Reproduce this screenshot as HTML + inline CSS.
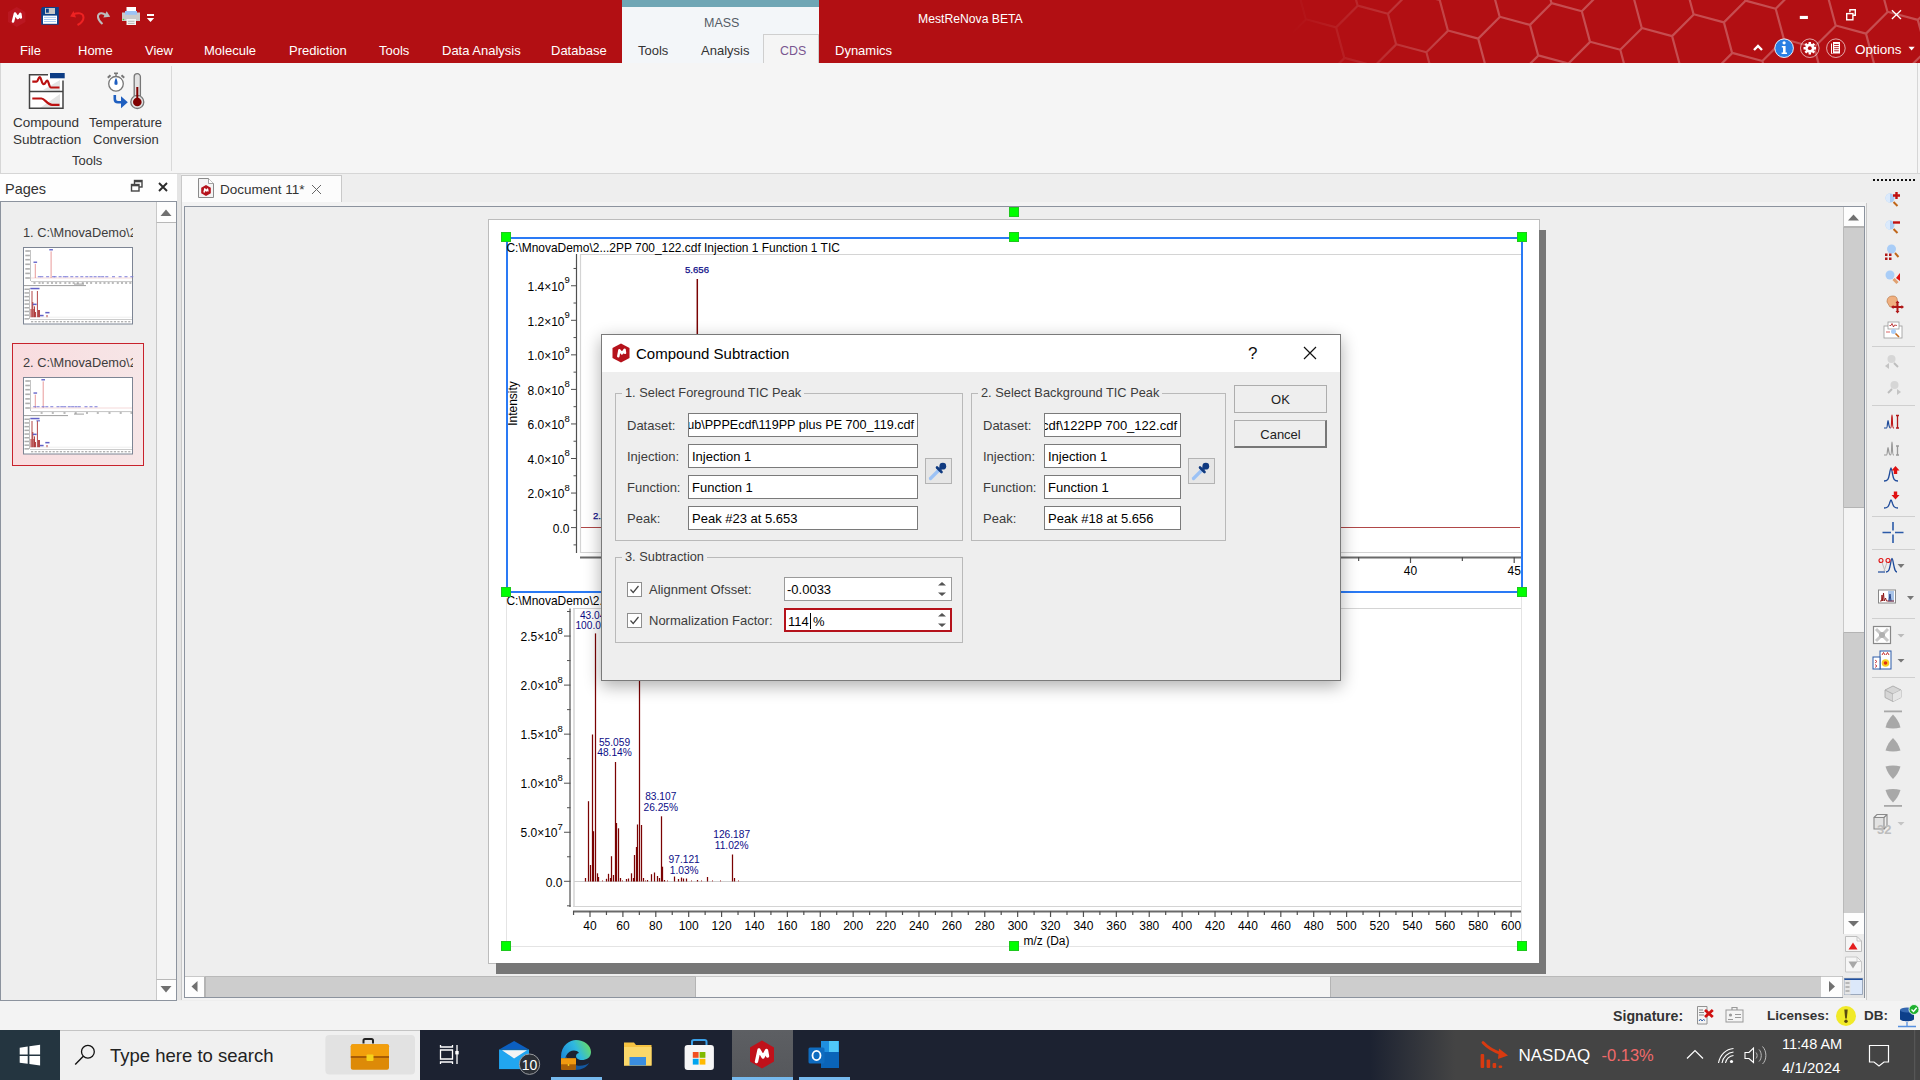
<!DOCTYPE html>
<html><head><meta charset="utf-8">
<style>
*{box-sizing:border-box;margin:0;padding:0}
html,body{width:1920px;height:1080px;overflow:hidden;background:#eeeeee;font-family:"Liberation Sans",sans-serif;position:relative}
.a{position:absolute}
.t{position:absolute;white-space:nowrap;line-height:1}
svg{position:absolute;overflow:visible}

</style></head><body>
<div class="a" style="left:0;top:0;width:1920px;height:63px;background:#b20f13;overflow:hidden">
<svg style="left:0;top:0" width="1920" height="63">
<defs><linearGradient id="hf" x1="1290" x2="1470" y1="40" y2="10" gradientUnits="userSpaceOnUse"><stop offset="0" stop-color="#fff" stop-opacity="0"/><stop offset="1" stop-color="#fff" stop-opacity="1"/></linearGradient>
<mask id="hm"><rect x="0" y="0" width="1920" height="63" fill="url(#hf)"/></mask></defs>
<path d="M1219.2 107.1L1227.3 137.3M1219.2 107.1L1189.0 99.0M1219.2 107.1L1241.3 85.0M1232.5 54.8L1240.6 85.0M1232.5 54.8L1202.3 46.7M1232.5 54.8L1254.6 32.7M1271.0 93.4L1279.1 123.6M1271.0 93.4L1240.8 85.3M1271.0 93.4L1293.1 71.3M1207.3 -36.1L1215.4 -5.9M1207.3 -36.1L1177.1 -44.2M1207.3 -36.1L1229.4 -58.2M1245.8 2.5L1253.9 32.7M1245.8 2.5L1215.6 -5.6M1245.8 2.5L1267.9 -19.6M1284.3 41.1L1292.4 71.3M1284.3 41.1L1254.1 33.0M1284.3 41.1L1306.4 19.0M1322.8 79.7L1330.9 109.9M1322.8 79.7L1292.6 71.6M1322.8 79.7L1344.9 57.6M1361.3 118.3L1369.4 148.5M1361.3 118.3L1331.1 110.2M1361.3 118.3L1383.4 96.2M1259.1 -49.8L1267.2 -19.6M1259.1 -49.8L1228.9 -57.9M1259.1 -49.8L1281.2 -71.9M1297.6 -11.2L1305.7 19.0M1297.6 -11.2L1267.4 -19.3M1297.6 -11.2L1319.7 -33.3M1336.1 27.4L1344.2 57.6M1336.1 27.4L1305.9 19.3M1336.1 27.4L1358.2 5.3M1374.6 66.0L1382.7 96.2M1374.6 66.0L1344.4 57.9M1374.6 66.0L1396.7 43.9M1413.1 104.6L1421.2 134.8M1413.1 104.6L1382.9 96.5M1413.1 104.6L1435.2 82.5M1349.4 -24.9L1357.5 5.3M1349.4 -24.9L1319.2 -33.0M1349.4 -24.9L1371.5 -47.0M1387.9 13.7L1396.0 43.9M1387.9 13.7L1357.7 5.6M1387.9 13.7L1410.0 -8.4M1426.4 52.3L1434.5 82.5M1426.4 52.3L1396.2 44.2M1426.4 52.3L1448.5 30.2M1464.9 90.9L1473.0 121.1M1464.9 90.9L1434.7 82.8M1464.9 90.9L1487.0 68.8M1401.2 -38.6L1409.3 -8.4M1401.2 -38.6L1371.0 -46.7M1401.2 -38.6L1423.3 -60.7M1439.7 0.0L1447.8 30.2M1439.7 0.0L1409.5 -8.1M1439.7 0.0L1461.8 -22.1M1478.2 38.6L1486.3 68.8M1478.2 38.6L1448.0 30.5M1478.2 38.6L1500.3 16.5M1516.7 77.2L1524.8 107.4M1516.7 77.2L1486.5 69.1M1516.7 77.2L1538.8 55.1M1555.2 115.8L1563.3 146.0M1555.2 115.8L1525.0 107.7M1555.2 115.8L1577.3 93.7M1453.0 -52.3L1461.1 -22.1M1453.0 -52.3L1422.8 -60.4M1453.0 -52.3L1475.1 -74.4M1491.5 -13.7L1499.6 16.5M1491.5 -13.7L1461.3 -21.8M1491.5 -13.7L1513.6 -35.8M1530.0 24.9L1538.1 55.1M1530.0 24.9L1499.8 16.8M1530.0 24.9L1552.1 2.8M1568.5 63.5L1576.6 93.7M1568.5 63.5L1538.3 55.4M1568.5 63.5L1590.6 41.4M1607.0 102.1L1615.1 132.3M1607.0 102.1L1576.8 94.0M1607.0 102.1L1629.1 80.0M1543.3 -27.4L1551.4 2.8M1543.3 -27.4L1513.1 -35.5M1543.3 -27.4L1565.4 -49.5M1581.8 11.2L1589.9 41.4M1581.8 11.2L1551.6 3.1M1581.8 11.2L1603.9 -10.9M1620.3 49.8L1628.4 80.0M1620.3 49.8L1590.1 41.7M1620.3 49.8L1642.4 27.7M1658.8 88.4L1666.9 118.6M1658.8 88.4L1628.6 80.3M1658.8 88.4L1680.9 66.3M1595.1 -41.1L1603.2 -10.9M1595.1 -41.1L1564.9 -49.2M1595.1 -41.1L1617.2 -63.2M1633.6 -2.5L1641.7 27.7M1633.6 -2.5L1603.4 -10.6M1633.6 -2.5L1655.7 -24.6M1672.1 36.1L1680.2 66.3M1672.1 36.1L1641.9 28.0M1672.1 36.1L1694.2 14.0M1710.6 74.7L1718.7 104.9M1710.6 74.7L1680.4 66.6M1710.6 74.7L1732.7 52.6M1749.1 113.3L1757.2 143.5M1749.1 113.3L1718.9 105.2M1749.1 113.3L1771.2 91.2M1646.9 -54.8L1655.0 -24.6M1646.9 -54.8L1616.7 -62.9M1646.9 -54.8L1669.0 -76.9M1685.4 -16.2L1693.5 14.0M1685.4 -16.2L1655.2 -24.3M1685.4 -16.2L1707.5 -38.3M1723.9 22.4L1732.0 52.6M1723.9 22.4L1693.7 14.3M1723.9 22.4L1746.0 0.3M1762.4 61.0L1770.5 91.2M1762.4 61.0L1732.2 52.9M1762.4 61.0L1784.5 38.9M1800.9 99.6L1809.0 129.8M1800.9 99.6L1770.7 91.5M1800.9 99.6L1823.0 77.5M1737.2 -29.9L1745.3 0.3M1737.2 -29.9L1707.0 -38.0M1737.2 -29.9L1759.3 -52.0M1775.7 8.7L1783.8 38.9M1775.7 8.7L1745.5 0.6M1775.7 8.7L1797.8 -13.4M1814.2 47.3L1822.3 77.5M1814.2 47.3L1784.0 39.2M1814.2 47.3L1836.3 25.2M1852.7 85.9L1860.8 116.1M1852.7 85.9L1822.5 77.8M1852.7 85.9L1874.8 63.8M1789.0 -43.6L1797.1 -13.4M1789.0 -43.6L1758.8 -51.7M1789.0 -43.6L1811.1 -65.7M1827.5 -5.0L1835.6 25.2M1827.5 -5.0L1797.3 -13.1M1827.5 -5.0L1849.6 -27.1M1866.0 33.6L1874.1 63.8M1866.0 33.6L1835.8 25.5M1866.0 33.6L1888.1 11.5M1904.5 72.2L1912.6 102.4M1904.5 72.2L1874.3 64.1M1904.5 72.2L1926.6 50.1M1943.0 110.8L1951.1 141.0M1943.0 110.8L1912.8 102.7M1943.0 110.8L1965.1 88.7M1840.8 -57.3L1848.9 -27.1M1840.8 -57.3L1810.6 -65.4M1840.8 -57.3L1862.9 -79.4M1879.3 -18.7L1887.4 11.5M1879.3 -18.7L1849.1 -26.8M1879.3 -18.7L1901.4 -40.8M1917.8 19.9L1925.9 50.1M1917.8 19.9L1887.6 11.8M1917.8 19.9L1939.9 -2.2M1956.3 58.5L1964.4 88.7M1956.3 58.5L1926.1 50.4M1956.3 58.5L1978.4 36.4M1931.1 -32.4L1939.2 -2.2M1931.1 -32.4L1900.9 -40.5M1931.1 -32.4L1953.2 -54.5M1969.6 6.2L1977.7 36.4M1969.6 6.2L1939.4 -1.9M1969.6 6.2L1991.7 -15.9" stroke="rgba(255,255,255,0.26)" stroke-width="2.2" fill="none" mask="url(#hm)"/>
</svg>
<!-- MASS context -->
<div class="a" style="left:622px;top:0;width:197px;height:63px;background:#f3f6f9"></div>
<div class="a" style="left:622px;top:0;width:197px;height:7px;background:#6fa6b5"></div>
<div class="a" style="left:763px;top:34px;width:56px;height:30px;background:#f5f5f5;border:1px solid #cfcfcf;border-bottom:none"></div>
<div class="t" style="left:704px;top:17px;font-size:12.5px;color:#555c66">MASS</div>
<div class="t" style="left:918px;top:12.5px;font-size:12.2px;color:#fff">MestReNova BETA</div>
<div class="t" style="left:20px;top:44px;font-size:13px;color:#fff">File</div>
<div class="t" style="left:78px;top:44px;font-size:13px;color:#fff">Home</div>
<div class="t" style="left:145px;top:44px;font-size:13px;color:#fff">View</div>
<div class="t" style="left:204px;top:44px;font-size:13px;color:#fff">Molecule</div>
<div class="t" style="left:289px;top:44px;font-size:13px;color:#fff">Prediction</div>
<div class="t" style="left:379px;top:44px;font-size:13px;color:#fff">Tools</div>
<div class="t" style="left:442px;top:44px;font-size:13px;color:#fff">Data Analysis</div>
<div class="t" style="left:551px;top:44px;font-size:13px;color:#fff">Database</div>
<div class="t" style="left:638px;top:44px;font-size:13px;color:#333">Tools</div>
<div class="t" style="left:701px;top:44px;font-size:13px;color:#333">Analysis</div>
<div class="t" style="left:780px;top:44.5px;font-size:12.4px;color:#7a5590">CDS</div>
<div class="t" style="left:835px;top:44px;font-size:13px;color:#fff">Dynamics</div>
<div class="t" style="left:1855px;top:43px;font-size:13.5px;color:#fff">Options</div>
</div>

<svg style="left:0;top:0" width="200" height="32">
<polygon points="16.7,7 25.4,12 25.4,22 16.7,27 8,22 8,12" fill="#ba1721"/>
<path d="M13 21.5 L15 13.5 L17.8 18 L20.3 13.8 L20.8 17.5" stroke="#fff" stroke-width="2.6" fill="none" stroke-linejoin="round" stroke-linecap="round"/>
<path d="M42.5 7 L58.8 7 L58.8 24.8 L41.2 24.8 L41.2 8.3 Z" fill="#0d3f8a"/>
<rect x="45" y="8" width="10" height="6" fill="#c8c8c8"/><rect x="46" y="8.7" width="2.8" height="4" fill="#0d3f8a"/>
<rect x="43" y="15.6" width="14" height="8.2" fill="#fff"/>
<path d="M44 17.4H56M44 19.5H56M44 21.5H56" stroke="#9cc2f0" stroke-width="0.9"/>
<path d="M73 14.5 C78 12 83.5 13 83.5 17.5 C83.5 21 80.5 23.5 77.5 25" stroke="#ee2222" stroke-width="2" fill="none"/>
<path d="M70.2 16.5 L73.5 11 L76 17.5 Z" fill="#ee2222"/>
<path d="M102.5 24 C97 19.5 96.5 14 101 13.2 C103.5 12.8 105 14.5 106 15.5" stroke="#bdbdbd" stroke-width="2" fill="none"/>
<path d="M110.2 16.7 L106.7 11.25 L103.3 17.5 Z" fill="#bdbdbd"/>
<rect x="126.5" y="7" width="9.5" height="4.5" fill="#fff"/>
<path d="M122 12.5 H140 V21 H122 Z" fill="#cacaca"/>
<rect x="125" y="11" width="12" height="3.8" fill="#9cc3f5"/>
<rect x="126.5" y="19" width="9.5" height="6" fill="#f4f4f4"/>
<path d="M128 21.3H134.5M128 23.4H134.5" stroke="#aaa" stroke-width="0.8"/>
<circle cx="123.5" cy="19.5" r="0.8" fill="#33dd33"/>
<rect x="147" y="14" width="7" height="2" fill="#fff"/>
<path d="M146.8 18 L154.2 18 L150.5 22 Z" fill="#fff"/>
</svg>
<svg style="left:1740px;top:0" width="180" height="63">
<rect x="59.8" y="15.9" width="8.1" height="3.1" fill="#fff"/>
<path d="M109.9 12.3 V9.8 H115.3 V15.2 H113" stroke="#fff" stroke-width="1.4" fill="none"/>
<rect x="106.7" y="13.6" width="6.2" height="6.2" stroke="#fff" stroke-width="1.4" fill="none"/>
<path d="M151.9 10.2 L161 19 M161 10.2 L151.9 19" stroke="#fff" stroke-width="1.3"/>
<path d="M14 50 L18 46 L22 50" stroke="#fff" stroke-width="2.4" fill="none"/>
<circle cx="44.1" cy="48.2" r="9.3" fill="#2b7fe3" stroke="#fff" stroke-width="0.9"/>
<circle cx="44.1" cy="42.8" r="1.6" fill="#fff"/>
<path d="M41.8 46 H45.6 V52.6 H47 V54 H41.6 V52.6 H43 V47.4 H41.8Z" fill="#fff"/>
<circle cx="69.8" cy="48.2" r="9.3" fill="none" stroke="rgba(255,255,255,0.7)" stroke-width="0.9"/>
<g transform="translate(69.8,48.2)"><circle r="4.6" fill="#fff"/><circle r="1.9" fill="#b20f13"/>
<path d="M-1.2 -6.3H1.2V-4H-1.2Z M-1.2 6.3H1.2V4H-1.2Z M-6.3 -1.2V1.2H-4V-1.2Z M6.3 -1.2V1.2H4V-1.2Z" fill="#fff"/>
<g transform="rotate(45)"><path d="M-1.2 -6.3H1.2V-4H-1.2Z M-1.2 6.3H1.2V4H-1.2Z M-6.3 -1.2V1.2H-4V-1.2Z M6.3 -1.2V1.2H4V-1.2Z" fill="#fff"/></g></g>
<circle cx="95.9" cy="48.2" r="9.3" fill="none" stroke="rgba(255,255,255,0.7)" stroke-width="0.9"/>
<path d="M91.5 43.5 V53.5 H92.5" stroke="#fff" stroke-width="1" fill="none"/><rect x="93" y="42" width="7" height="11.5" fill="#fff"/><path d="M94.2 44.5H98.8M94.2 46.6H98.8M94.2 48.7H98.8M94.2 50.8H98.8" stroke="#b20f13" stroke-width="0.9"/>
<path d="M168.5 46.8 L174.7 46.8 L171.6 50.4 Z" fill="#fff"/>
</svg>

<div class="a" style="left:0;top:63px;width:1920px;height:111px;background:#f5f5f5;border-bottom:1px solid #d6d6d6;border-left:1px solid #d6d6d6"></div><div class="a" style="left:1917px;top:63px;width:1px;height:110px;background:#d6d6d6"></div>
<div class="a" style="left:171px;top:66px;width:1px;height:105px;background:#d9d9d9"></div>
<svg style="left:0;top:63px" width="170" height="60">
<g transform="translate(0,-63)">
<path d="M38.5 82 L46 76 L60 84 L60 108 L42 108 Z" fill="#e6e6e6"/>
<rect x="29.5" y="75" width="33" height="33" fill="#fff"/>
<path d="M43 90 L60 80 L60 91 Z M40 108 L60 94 L60 108Z" fill="#e4e4e4"/>
<path d="M48 74.8 H29.5 V108.3 H63 V80.5" stroke="#444" stroke-width="1.5" fill="none"/>
<path d="M29.5 91.5 H63" stroke="#444" stroke-width="1.5"/>
<rect x="50" y="73" width="14.7" height="5.3" fill="#0d3d85"/>
<path d="M32.3 81.6 L36.5 81.6 C38.2 81.6 38.3 77 39.7 77 C41.3 77 41.5 84.2 43.6 84.2 C45.5 84.2 45.8 80.5 47.2 80.5 C48.8 80.5 48.8 87.5 51 87.5 L59.5 87.5" stroke="#bb1111" stroke-width="2.2" fill="none"/>
<path d="M32.3 98.5 L41.5 98.5 C44.5 98.5 47.5 104.8 52 104.8 L59.5 104.8" stroke="#bb1111" stroke-width="2.2" fill="none"/>
<circle cx="116" cy="83.8" r="7.3" fill="#fff" stroke="#777" stroke-width="1.3"/>
<rect x="114" y="72.5" width="4" height="1.6" fill="#777"/><rect x="115.3" y="73.5" width="1.4" height="3" fill="#777"/>
<path d="M107.8 77.8 L110.5 75.2 M124.2 77.8 L121.5 75.2" stroke="#777" stroke-width="2"/>
<path d="M116 77.8 C117.3 80 117.8 83 117.5 84 C117.2 85.2 114.8 85.2 114.5 84 C114.2 83 114.7 80 116 77.8Z" fill="#1f5fc0"/>
<path d="M114.8 95 V99 C114.8 101 116 102.3 118 102.3 H124" stroke="#1f5fc0" stroke-width="2.6" fill="none"/>
<path d="M121 96.3 L127.8 102.3 L121 108.2 Z" fill="#1f5fc0"/>
<path d="M134.2 96 V76.8 A3.1 3.1 0 0 1 140.4 76.8 V96" fill="#e2e2e2" stroke="#777" stroke-width="1.3"/>
<circle cx="137.3" cy="102" r="6.5" fill="#e2e2e2" stroke="#777" stroke-width="1.3"/>
<path d="M134.3 96.5 H140.3 V97.5 H134.3Z" fill="#e2e2e2"/>
<circle cx="137.3" cy="102" r="4.3" fill="#800000"/>
<rect x="136.3" y="87" width="2" height="14" fill="#800000"/>
</g></svg>
<div class="t" style="left:13px;top:116px;font-size:13.5px;color:#333">Compound</div>
<div class="t" style="left:13px;top:133px;font-size:13.5px;color:#333">Subtraction</div>
<div class="t" style="left:89px;top:116px;font-size:13px;color:#333">Temperature</div>
<div class="t" style="left:93px;top:133px;font-size:13px;color:#333">Conversion</div>
<div class="t" style="left:72px;top:154px;font-size:13px;color:#333">Tools</div>

<div class="a" style="left:0;top:174px;width:177px;height:27px;background:#fefefe"></div>
<div class="t" style="left:5px;top:182px;font-size:14.5px;color:#333">Pages</div>
<svg style="left:130px;top:179px" width="14" height="14"><rect x="4.5" y="1.5" width="7.5" height="6.5" fill="none" stroke="#444" stroke-width="1.4"/><rect x="4.5" y="1.5" width="7.5" height="1.8" fill="#444"/><rect x="1.5" y="5.5" width="7.5" height="6.5" fill="#fefefe" stroke="#444" stroke-width="1.4"/><rect x="1.5" y="5.5" width="7.5" height="1.8" fill="#444"/></svg>
<svg style="left:157px;top:181px" width="12" height="12"><path d="M2 2L10 10M10 2L2 10" stroke="#2b2b2b" stroke-width="1.9"/></svg>
<div class="a" style="left:0;top:201px;width:177px;height:800px;background:#eeeeee;border:1px solid #8c939e"></div>
<div class="a" style="left:156px;top:202px;width:20px;height:798px;background:#f4f4f4;border-left:1px solid #c8c8c8"></div>
<div class="a" style="left:156px;top:202px;width:20px;height:21px;background:#fdfdfd;border-left:1px solid #c8c8c8;border-bottom:1px solid #b8b8b8"></div>
<svg style="left:156px;top:202px" width="20" height="21"><path d="M4.5 14 L10 7.4 L15.5 14Z" fill="#707070"/></svg>
<div class="a" style="left:156px;top:979px;width:20px;height:21px;background:#fdfdfd;border-left:1px solid #c8c8c8;border-top:1px solid #b8b8b8"></div>
<svg style="left:156px;top:979px" width="20" height="21"><path d="M4.5 7 L10 13.6 L15.5 7Z" fill="#707070"/></svg>
<div class="a" style="left:177px;top:174px;width:4px;height:826px;background:#e4e4e4"></div>
<div class="t" style="left:23px;top:226.5px;font-size:12.8px;color:#3c3c3c;width:110px;overflow:hidden">1. C:\MnovaDemo\2</div>
<svg style="left:23px;top:247px" width="110" height="78">
<rect x="0.5" y="0.5" width="109" height="76.5" fill="#fff" stroke="#7d8594" stroke-width="1"/>
<rect x="2.3" y="3.2" width="4.6" height="1.6" fill="#9a9a9a" opacity="0.8"/>
<rect x="2.3" y="7.7" width="4.6" height="1.6" fill="#9a9a9a" opacity="0.8"/>
<rect x="2.3" y="11.9" width="4.6" height="1.6" fill="#9a9a9a" opacity="0.8"/>
<rect x="2.3" y="16.5" width="4.6" height="1.6" fill="#9a9a9a" opacity="0.8"/>
<rect x="2.3" y="21.1" width="4.6" height="1.6" fill="#9a9a9a" opacity="0.8"/>
<rect x="2.3" y="25.6" width="4.6" height="1.6" fill="#9a9a9a" opacity="0.8"/>
<rect x="2.3" y="30.2" width="4.6" height="1.6" fill="#9a9a9a" opacity="0.8"/>
<line x1="7.5" y1="3" x2="7.5" y2="34" stroke="#9a9a9a" stroke-width="0.6"/>
<line x1="8" y1="34.6" x2="109" y2="34.6" stroke="#aaa" stroke-width="0.7"/>
<line x1="8" y1="31" x2="109" y2="31" stroke="#eab0b0" stroke-width="0.5"/>
<rect x="10.5" y="35.4" width="2" height="1.2" fill="#777" opacity="0.8"/>
<rect x="15.5" y="35.4" width="2" height="1.2" fill="#777" opacity="0.8"/>
<rect x="18.8" y="35.4" width="2" height="1.2" fill="#777" opacity="0.8"/>
<rect x="23.8" y="35.4" width="2" height="1.2" fill="#777" opacity="0.8"/>
<rect x="28.0" y="35.4" width="2" height="1.2" fill="#777" opacity="0.8"/>
<rect x="32.1" y="35.4" width="2" height="1.2" fill="#777" opacity="0.8"/>
<rect x="36.3" y="35.4" width="2" height="1.2" fill="#777" opacity="0.8"/>
<rect x="41.3" y="35.4" width="2" height="1.2" fill="#777" opacity="0.8"/>
<rect x="45.5" y="35.4" width="2" height="1.2" fill="#777" opacity="0.8"/>
<rect x="49.6" y="35.4" width="2" height="1.2" fill="#777" opacity="0.8"/>
<rect x="53.8" y="35.4" width="2" height="1.2" fill="#777" opacity="0.8"/>
<rect x="58.8" y="35.4" width="2" height="1.2" fill="#777" opacity="0.8"/>
<rect x="63.0" y="35.4" width="2" height="1.2" fill="#777" opacity="0.8"/>
<rect x="67.1" y="35.4" width="2" height="1.2" fill="#777" opacity="0.8"/>
<rect x="72.1" y="35.4" width="2" height="1.2" fill="#777" opacity="0.8"/>
<rect x="76.3" y="35.4" width="2" height="1.2" fill="#777" opacity="0.8"/>
<rect x="80.5" y="35.4" width="2" height="1.2" fill="#777" opacity="0.8"/>
<rect x="84.6" y="35.4" width="2" height="1.2" fill="#777" opacity="0.8"/>
<rect x="88.8" y="35.4" width="2" height="1.2" fill="#777" opacity="0.8"/>
<rect x="93.8" y="35.4" width="2" height="1.2" fill="#777" opacity="0.8"/>
<rect x="98.0" y="35.4" width="2" height="1.2" fill="#777" opacity="0.8"/>
<rect x="102.1" y="35.4" width="2" height="1.2" fill="#777" opacity="0.8"/>
<rect x="106.3" y="35.4" width="2" height="1.2" fill="#777" opacity="0.8"/>
<line x1="12.3" y1="16.9" x2="12.3" y2="31" stroke="#e07070" stroke-width="0.7"/>
<rect x="10.5" y="14.499999999999998" width="3.6" height="1.5" fill="#6060c8" opacity="0.9"/>
<line x1="28.1" y1="4.4" x2="28.1" y2="31" stroke="#e07070" stroke-width="0.7"/>
<rect x="26.3" y="2.0000000000000004" width="3.6" height="1.5" fill="#6060c8" opacity="0.9"/>
<rect x="14.8" y="29" width="3" height="1.3" fill="#7a7ad8" opacity="0.75"/>
<rect x="17.3" y="29" width="3" height="1.3" fill="#7a7ad8" opacity="0.75"/>
<rect x="23.1" y="29" width="3" height="1.3" fill="#7a7ad8" opacity="0.75"/>
<rect x="29.0" y="29" width="3" height="1.3" fill="#7a7ad8" opacity="0.75"/>
<rect x="30.6" y="29" width="3" height="1.3" fill="#7a7ad8" opacity="0.75"/>
<rect x="35.6" y="29" width="3" height="1.3" fill="#7a7ad8" opacity="0.75"/>
<rect x="39.8" y="29" width="3" height="1.3" fill="#7a7ad8" opacity="0.75"/>
<rect x="42.3" y="29" width="3" height="1.3" fill="#7a7ad8" opacity="0.75"/>
<rect x="47.3" y="29" width="3" height="1.3" fill="#7a7ad8" opacity="0.75"/>
<rect x="52.3" y="29" width="3" height="1.3" fill="#7a7ad8" opacity="0.75"/>
<rect x="57.3" y="29" width="3" height="1.3" fill="#7a7ad8" opacity="0.75"/>
<rect x="62.3" y="29" width="3" height="1.3" fill="#7a7ad8" opacity="0.75"/>
<rect x="66.5" y="29" width="3" height="1.3" fill="#7a7ad8" opacity="0.75"/>
<rect x="70.6" y="29" width="3" height="1.3" fill="#7a7ad8" opacity="0.75"/>
<rect x="74.8" y="29" width="3" height="1.3" fill="#7a7ad8" opacity="0.75"/>
<rect x="78.1" y="29" width="3" height="1.3" fill="#7a7ad8" opacity="0.75"/>
<rect x="82.3" y="29" width="3" height="1.3" fill="#7a7ad8" opacity="0.75"/>
<rect x="89.0" y="29" width="3" height="1.3" fill="#7a7ad8" opacity="0.75"/>
<rect x="95.6" y="29" width="3" height="1.3" fill="#7a7ad8" opacity="0.75"/>
<rect x="101.5" y="29" width="3" height="1.3" fill="#7a7ad8" opacity="0.75"/>
<rect x="107.3" y="29" width="3" height="1.3" fill="#7a7ad8" opacity="0.75"/>
<rect x="1" y="38" width="62" height="1.1" fill="#8a8a8a" opacity="0.75"/>
<rect x="51" y="36.6" width="10" height="1" fill="#777" opacity="0.7"/>
<rect x="1.5" y="41.5" width="4.5" height="1.5" fill="#9a9a9a" opacity="0.8"/>
<rect x="1.5" y="45.2" width="4.5" height="1.5" fill="#9a9a9a" opacity="0.8"/>
<rect x="1.5" y="48.9" width="4.5" height="1.5" fill="#9a9a9a" opacity="0.8"/>
<rect x="1.5" y="52.6" width="4.5" height="1.5" fill="#9a9a9a" opacity="0.8"/>
<rect x="1.5" y="56.3" width="4.5" height="1.5" fill="#9a9a9a" opacity="0.8"/>
<rect x="1.5" y="60.0" width="4.5" height="1.5" fill="#9a9a9a" opacity="0.8"/>
<rect x="1.5" y="63.7" width="4.5" height="1.5" fill="#9a9a9a" opacity="0.8"/>
<rect x="1.5" y="67.4" width="4.5" height="1.5" fill="#9a9a9a" opacity="0.8"/>
<rect x="1.5" y="71.1" width="4.5" height="1.5" fill="#9a9a9a" opacity="0.8"/>
<line x1="6.5" y1="41" x2="6.5" y2="72" stroke="#9a9a9a" stroke-width="0.6"/>
<line x1="7" y1="70.2" x2="109" y2="70.2" stroke="#e2e2e2" stroke-width="0.6"/>
<line x1="8" y1="62" x2="8" y2="70.2" stroke="#a01818" stroke-width="0.8"/>
<line x1="9" y1="44" x2="9" y2="70.2" stroke="#a01818" stroke-width="0.8"/>
<line x1="9.8" y1="55" x2="9.8" y2="70.2" stroke="#a01818" stroke-width="0.8"/>
<line x1="10.8" y1="62" x2="10.8" y2="70.2" stroke="#a01818" stroke-width="0.8"/>
<line x1="11.5" y1="59.4" x2="11.5" y2="70.2" stroke="#a01818" stroke-width="0.8"/>
<line x1="12.5" y1="65" x2="12.5" y2="70.2" stroke="#a01818" stroke-width="0.8"/>
<line x1="14.4" y1="44" x2="14.4" y2="70.2" stroke="#a01818" stroke-width="0.8"/>
<line x1="15.5" y1="63" x2="15.5" y2="70.2" stroke="#a01818" stroke-width="0.8"/>
<line x1="16.5" y1="63" x2="16.5" y2="70.2" stroke="#a01818" stroke-width="0.8"/>
<line x1="24" y1="68" x2="24" y2="70.2" stroke="#a01818" stroke-width="0.8"/>
<rect x="7.3" y="40.8" width="9.2" height="1.5" fill="#5050c0" opacity="0.9"/>
<rect x="9.8" y="56.6" width="3.8" height="1.5" fill="#5050c0" opacity="0.9"/>
<rect x="16.9" y="67.8" width="3.7" height="1.5" fill="#5050c0" opacity="0.9"/>
<rect x="22.3" y="64.9" width="4.2" height="1.5" fill="#5050c0" opacity="0.9"/>
<line x1="7" y1="72.5" x2="109" y2="72.5" stroke="#aaa" stroke-width="0.6"/>
<rect x="8.0" y="74.2" width="2.2" height="1.1" fill="#888" opacity="0.8"/>
<rect x="11.6" y="74.2" width="2.2" height="1.1" fill="#888" opacity="0.8"/>
<rect x="15.2" y="74.2" width="2.2" height="1.1" fill="#888" opacity="0.8"/>
<rect x="18.8" y="74.2" width="2.2" height="1.1" fill="#888" opacity="0.8"/>
<rect x="22.4" y="74.2" width="2.2" height="1.1" fill="#888" opacity="0.8"/>
<rect x="26.0" y="74.2" width="2.2" height="1.1" fill="#888" opacity="0.8"/>
<rect x="29.6" y="74.2" width="2.2" height="1.1" fill="#888" opacity="0.8"/>
<rect x="33.2" y="74.2" width="2.2" height="1.1" fill="#888" opacity="0.8"/>
<rect x="36.8" y="74.2" width="2.2" height="1.1" fill="#888" opacity="0.8"/>
<rect x="40.4" y="74.2" width="2.2" height="1.1" fill="#888" opacity="0.8"/>
<rect x="44.0" y="74.2" width="2.2" height="1.1" fill="#888" opacity="0.8"/>
<rect x="47.6" y="74.2" width="2.2" height="1.1" fill="#888" opacity="0.8"/>
<rect x="51.2" y="74.2" width="2.2" height="1.1" fill="#888" opacity="0.8"/>
<rect x="54.8" y="74.2" width="2.2" height="1.1" fill="#888" opacity="0.8"/>
<rect x="58.4" y="74.2" width="2.2" height="1.1" fill="#888" opacity="0.8"/>
<rect x="62.0" y="74.2" width="2.2" height="1.1" fill="#888" opacity="0.8"/>
<rect x="65.6" y="74.2" width="2.2" height="1.1" fill="#888" opacity="0.8"/>
<rect x="69.2" y="74.2" width="2.2" height="1.1" fill="#888" opacity="0.8"/>
<rect x="72.8" y="74.2" width="2.2" height="1.1" fill="#888" opacity="0.8"/>
<rect x="76.4" y="74.2" width="2.2" height="1.1" fill="#888" opacity="0.8"/>
<rect x="80.0" y="74.2" width="2.2" height="1.1" fill="#888" opacity="0.8"/>
<rect x="83.6" y="74.2" width="2.2" height="1.1" fill="#888" opacity="0.8"/>
<rect x="87.2" y="74.2" width="2.2" height="1.1" fill="#888" opacity="0.8"/>
<rect x="90.8" y="74.2" width="2.2" height="1.1" fill="#888" opacity="0.8"/>
<rect x="94.4" y="74.2" width="2.2" height="1.1" fill="#888" opacity="0.8"/>
<rect x="98.0" y="74.2" width="2.2" height="1.1" fill="#888" opacity="0.8"/>
<rect x="101.6" y="74.2" width="2.2" height="1.1" fill="#888" opacity="0.8"/>
<rect x="105.2" y="74.2" width="2.2" height="1.1" fill="#888" opacity="0.8"/>
</svg>
<div class="a" style="left:12px;top:343px;width:132px;height:123px;background:linear-gradient(90deg,#f9dcdf,#f6e6e7);border:1px solid #c8222c"></div>
<div class="t" style="left:23px;top:356.5px;font-size:12.8px;color:#3c3c3c;width:110px;overflow:hidden">2. C:\MnovaDemo\2</div>
<svg style="left:23px;top:377px" width="110" height="78">
<rect x="0.5" y="0.5" width="109" height="76.5" fill="#fff" stroke="#7d8594" stroke-width="1"/>
<rect x="2.3" y="3.2" width="4.6" height="1.6" fill="#9a9a9a" opacity="0.8"/>
<rect x="2.3" y="7.7" width="4.6" height="1.6" fill="#9a9a9a" opacity="0.8"/>
<rect x="2.3" y="11.9" width="4.6" height="1.6" fill="#9a9a9a" opacity="0.8"/>
<rect x="2.3" y="16.5" width="4.6" height="1.6" fill="#9a9a9a" opacity="0.8"/>
<rect x="2.3" y="21.1" width="4.6" height="1.6" fill="#9a9a9a" opacity="0.8"/>
<rect x="2.3" y="25.6" width="4.6" height="1.6" fill="#9a9a9a" opacity="0.8"/>
<rect x="2.3" y="30.2" width="4.6" height="1.6" fill="#9a9a9a" opacity="0.8"/>
<line x1="7.5" y1="3" x2="7.5" y2="34" stroke="#9a9a9a" stroke-width="0.6"/>
<line x1="8" y1="34.6" x2="109" y2="34.6" stroke="#aaa" stroke-width="0.7"/>
<line x1="8" y1="31" x2="109" y2="31" stroke="#eab0b0" stroke-width="0.5"/>
<rect x="17.6" y="35.4" width="2" height="1.2" fill="#777" opacity="0.8"/>
<rect x="28.8" y="35.4" width="2" height="1.2" fill="#777" opacity="0.8"/>
<rect x="40.5" y="35.4" width="2" height="1.2" fill="#777" opacity="0.8"/>
<rect x="51.7" y="35.4" width="2" height="1.2" fill="#777" opacity="0.8"/>
<rect x="63.0" y="35.4" width="2" height="1.2" fill="#777" opacity="0.8"/>
<rect x="73.8" y="35.4" width="2" height="1.2" fill="#777" opacity="0.8"/>
<rect x="85.5" y="35.4" width="2" height="1.2" fill="#777" opacity="0.8"/>
<rect x="96.7" y="35.4" width="2" height="1.2" fill="#777" opacity="0.8"/>
<rect x="107.5" y="35.4" width="2" height="1.2" fill="#777" opacity="0.8"/>
<line x1="12.3" y1="17.7" x2="12.3" y2="31" stroke="#e07070" stroke-width="0.7"/>
<rect x="10.5" y="15.299999999999999" width="3.6" height="1.5" fill="#6060c8" opacity="0.9"/>
<line x1="20.2" y1="4.4" x2="20.2" y2="31" stroke="#e07070" stroke-width="0.7"/>
<rect x="18.4" y="2.0000000000000004" width="3.6" height="1.5" fill="#6060c8" opacity="0.9"/>
<rect x="10.2" y="29" width="3" height="1.3" fill="#7a7ad8" opacity="0.75"/>
<rect x="13.6" y="29" width="3" height="1.3" fill="#7a7ad8" opacity="0.75"/>
<rect x="18.6" y="29" width="3" height="1.3" fill="#7a7ad8" opacity="0.75"/>
<rect x="22.3" y="29" width="3" height="1.3" fill="#7a7ad8" opacity="0.75"/>
<rect x="27.3" y="29" width="3" height="1.3" fill="#7a7ad8" opacity="0.75"/>
<rect x="33.5" y="29" width="3" height="1.3" fill="#7a7ad8" opacity="0.75"/>
<rect x="37.3" y="29" width="3" height="1.3" fill="#7a7ad8" opacity="0.75"/>
<rect x="40.2" y="29" width="3" height="1.3" fill="#7a7ad8" opacity="0.75"/>
<rect x="44.8" y="29" width="3" height="1.3" fill="#7a7ad8" opacity="0.75"/>
<rect x="48.1" y="29" width="3" height="1.3" fill="#7a7ad8" opacity="0.75"/>
<rect x="51.5" y="29" width="3" height="1.3" fill="#7a7ad8" opacity="0.75"/>
<rect x="54.8" y="29" width="3" height="1.3" fill="#7a7ad8" opacity="0.75"/>
<rect x="61.5" y="29" width="3" height="1.3" fill="#7a7ad8" opacity="0.75"/>
<rect x="66.5" y="29" width="3" height="1.3" fill="#7a7ad8" opacity="0.75"/>
<rect x="71.5" y="29" width="3" height="1.3" fill="#7a7ad8" opacity="0.75"/>
<rect x="1" y="38" width="44" height="1.1" fill="#8a8a8a" opacity="0.75"/>
<rect x="51" y="36.6" width="10" height="1" fill="#777" opacity="0.7"/>
<rect x="1.5" y="41.5" width="4.5" height="1.5" fill="#9a9a9a" opacity="0.8"/>
<rect x="1.5" y="45.2" width="4.5" height="1.5" fill="#9a9a9a" opacity="0.8"/>
<rect x="1.5" y="48.9" width="4.5" height="1.5" fill="#9a9a9a" opacity="0.8"/>
<rect x="1.5" y="52.6" width="4.5" height="1.5" fill="#9a9a9a" opacity="0.8"/>
<rect x="1.5" y="56.3" width="4.5" height="1.5" fill="#9a9a9a" opacity="0.8"/>
<rect x="1.5" y="60.0" width="4.5" height="1.5" fill="#9a9a9a" opacity="0.8"/>
<rect x="1.5" y="63.7" width="4.5" height="1.5" fill="#9a9a9a" opacity="0.8"/>
<rect x="1.5" y="67.4" width="4.5" height="1.5" fill="#9a9a9a" opacity="0.8"/>
<rect x="1.5" y="71.1" width="4.5" height="1.5" fill="#9a9a9a" opacity="0.8"/>
<line x1="6.5" y1="41" x2="6.5" y2="72" stroke="#9a9a9a" stroke-width="0.6"/>
<line x1="7" y1="70.2" x2="109" y2="70.2" stroke="#e2e2e2" stroke-width="0.6"/>
<line x1="8" y1="62" x2="8" y2="70.2" stroke="#a01818" stroke-width="0.8"/>
<line x1="9" y1="44" x2="9" y2="70.2" stroke="#a01818" stroke-width="0.8"/>
<line x1="9.8" y1="55" x2="9.8" y2="70.2" stroke="#a01818" stroke-width="0.8"/>
<line x1="10.8" y1="62" x2="10.8" y2="70.2" stroke="#a01818" stroke-width="0.8"/>
<line x1="11.5" y1="59.4" x2="11.5" y2="70.2" stroke="#a01818" stroke-width="0.8"/>
<line x1="12.5" y1="65" x2="12.5" y2="70.2" stroke="#a01818" stroke-width="0.8"/>
<line x1="14.4" y1="44" x2="14.4" y2="70.2" stroke="#a01818" stroke-width="0.8"/>
<line x1="15.5" y1="63" x2="15.5" y2="70.2" stroke="#a01818" stroke-width="0.8"/>
<line x1="16.5" y1="63" x2="16.5" y2="70.2" stroke="#a01818" stroke-width="0.8"/>
<line x1="24" y1="68" x2="24" y2="70.2" stroke="#a01818" stroke-width="0.8"/>
<rect x="7.3" y="40.8" width="9.2" height="1.5" fill="#5050c0" opacity="0.9"/>
<rect x="9.8" y="56.6" width="3.8" height="1.5" fill="#5050c0" opacity="0.9"/>
<rect x="16.9" y="67.8" width="3.7" height="1.5" fill="#5050c0" opacity="0.9"/>
<rect x="22.3" y="64.9" width="4.2" height="1.5" fill="#5050c0" opacity="0.9"/>
<rect x="13.5" y="43.2" width="3.5" height="1.2" fill="#5050c0" opacity="0.8"/>
<line x1="7" y1="72.5" x2="109" y2="72.5" stroke="#aaa" stroke-width="0.6"/>
<rect x="8.0" y="74.2" width="2.2" height="1.1" fill="#888" opacity="0.8"/>
<rect x="11.6" y="74.2" width="2.2" height="1.1" fill="#888" opacity="0.8"/>
<rect x="15.2" y="74.2" width="2.2" height="1.1" fill="#888" opacity="0.8"/>
<rect x="18.8" y="74.2" width="2.2" height="1.1" fill="#888" opacity="0.8"/>
<rect x="22.4" y="74.2" width="2.2" height="1.1" fill="#888" opacity="0.8"/>
<rect x="26.0" y="74.2" width="2.2" height="1.1" fill="#888" opacity="0.8"/>
<rect x="29.6" y="74.2" width="2.2" height="1.1" fill="#888" opacity="0.8"/>
<rect x="33.2" y="74.2" width="2.2" height="1.1" fill="#888" opacity="0.8"/>
<rect x="36.8" y="74.2" width="2.2" height="1.1" fill="#888" opacity="0.8"/>
<rect x="40.4" y="74.2" width="2.2" height="1.1" fill="#888" opacity="0.8"/>
<rect x="44.0" y="74.2" width="2.2" height="1.1" fill="#888" opacity="0.8"/>
<rect x="47.6" y="74.2" width="2.2" height="1.1" fill="#888" opacity="0.8"/>
<rect x="51.2" y="74.2" width="2.2" height="1.1" fill="#888" opacity="0.8"/>
<rect x="54.8" y="74.2" width="2.2" height="1.1" fill="#888" opacity="0.8"/>
<rect x="58.4" y="74.2" width="2.2" height="1.1" fill="#888" opacity="0.8"/>
<rect x="62.0" y="74.2" width="2.2" height="1.1" fill="#888" opacity="0.8"/>
<rect x="65.6" y="74.2" width="2.2" height="1.1" fill="#888" opacity="0.8"/>
<rect x="69.2" y="74.2" width="2.2" height="1.1" fill="#888" opacity="0.8"/>
<rect x="72.8" y="74.2" width="2.2" height="1.1" fill="#888" opacity="0.8"/>
<rect x="76.4" y="74.2" width="2.2" height="1.1" fill="#888" opacity="0.8"/>
<rect x="80.0" y="74.2" width="2.2" height="1.1" fill="#888" opacity="0.8"/>
<rect x="83.6" y="74.2" width="2.2" height="1.1" fill="#888" opacity="0.8"/>
<rect x="87.2" y="74.2" width="2.2" height="1.1" fill="#888" opacity="0.8"/>
<rect x="90.8" y="74.2" width="2.2" height="1.1" fill="#888" opacity="0.8"/>
<rect x="94.4" y="74.2" width="2.2" height="1.1" fill="#888" opacity="0.8"/>
<rect x="98.0" y="74.2" width="2.2" height="1.1" fill="#888" opacity="0.8"/>
<rect x="101.6" y="74.2" width="2.2" height="1.1" fill="#888" opacity="0.8"/>
<rect x="105.2" y="74.2" width="2.2" height="1.1" fill="#888" opacity="0.8"/>
</svg>
<div class="a" style="left:181px;top:175px;width:161px;height:28px;background:#fcfcfc;border:1px solid #c9c9c9;border-bottom:none"></div>
<svg style="left:196px;top:177px" width="20" height="22">
<path d="M2.5 1.5 H12.5 L17.5 6.5 V20.5 H2.5 Z" fill="#f4f4f4" stroke="#8a8a8a" stroke-width="1"/>
<path d="M12.5 1.5 V6.5 H17.5" fill="#fff" stroke="#8a8a8a" stroke-width="0.8"/>
<polygon points="10,8 14.8,10.7 14.8,16.3 10,19 5.2,16.3 5.2,10.7" fill="#b5121b"/>
<path d="M8 15.5 L8.8 11.8 L10.3 14 L11.6 12 L12 14.5" stroke="#fff" stroke-width="1.4" fill="none" stroke-linejoin="round"/>
</svg>
<div class="t" style="left:220px;top:183px;font-size:13.5px;color:#333">Document 11*</div>
<svg style="left:311px;top:184px" width="12" height="12"><path d="M1 1L10 10M10 1L1 10" stroke="#666" stroke-width="1"/></svg>
<div class="a" style="left:181px;top:202px;width:1686px;height:798px;background:#f3f3f3;border-left:1px solid #c9c9c9"></div>
<div class="a" style="left:184px;top:206px;width:1681px;height:792px;background:#eeeeee;border:1px solid #8c939e"></div>
<!-- vertical scrollbar -->
<div class="a" style="left:1843px;top:207px;width:21px;height:770px;background:#cdcdcd;border-left:1px solid #b9b9b9"></div>
<div class="a" style="left:1843px;top:207px;width:21px;height:21px;background:#fdfdfd;border-left:1px solid #c8c8c8;border-bottom:2px solid #b4b4b4"></div>
<svg style="left:1843px;top:207px" width="21" height="21"><path d="M5 13.5 L10.5 7.5 L16 13.5Z" fill="#707070"/></svg>
<div class="a" style="left:1843px;top:507px;width:21px;height:126px;background:#f4f4f4;border-left:1px solid #c8c8c8;border-top:1px solid #b4b4b4;border-bottom:1px solid #b4b4b4"></div>
<div class="a" style="left:1843px;top:913px;width:21px;height:21px;background:#fdfdfd;border-left:1px solid #c8c8c8"></div>
<svg style="left:1843px;top:913px" width="21" height="21"><path d="M5 8 L10.5 13.5 L16 8Z" fill="#707070"/></svg>
<div class="a" style="left:1843px;top:934px;width:21px;height:43px;background:#ececec"></div>
<svg style="left:1843px;top:934px" width="21" height="43">
<path d="M2.5 2.5 H14 L18.5 7 V17.5 H2.5Z" fill="#f6f6f6" stroke="#bdbdbd" stroke-width="1"/><path d="M14 2.5 V7 H18.5" fill="none" stroke="#bdbdbd" stroke-width="0.8"/>
<path d="M5.5 15.5 L10 8.5 L14.5 15.5Z" fill="#e41e1e"/>
<path d="M2.5 23 H14 L18.5 27.5 V38 H2.5Z" fill="#f6f6f6" stroke="#c8c8c8" stroke-width="1"/><path d="M14 23 V27.5 H18.5" fill="none" stroke="#c8c8c8" stroke-width="0.8"/>
<path d="M5.5 27.5 L10 34.5 L14.5 27.5Z" fill="#a8a8a8"/>
</svg>
<div class="a" style="left:1843px;top:977px;width:21px;height:21px;background:#e4e4e4"></div>
<svg style="left:1843px;top:977px" width="21" height="21">
<rect x="1.5" y="1.5" width="18" height="16" fill="#dce8fa" stroke="#8a9ab0" stroke-width="0.8"/>
<rect x="1.5" y="1.5" width="18" height="1.5" fill="#2050a0"/>
<rect x="1.5" y="3" width="6" height="14.5" fill="#e6e6e6"/>
<path d="M2.5 6H6.5M2.5 10H6.5M2.5 14H6.5" stroke="#888" stroke-width="1.2"/>
</svg>
<!-- horizontal scrollbar -->
<div class="a" style="left:185px;top:976px;width:1658px;height:21px;background:#cdcdcd;border-top:1px solid #b9b9b9"></div>
<div class="a" style="left:185px;top:976px;width:21px;height:21px;background:#fdfdfd;border-right:2px solid #b4b4b4;border-top:1px solid #c8c8c8"></div>
<svg style="left:185px;top:976px" width="21" height="21"><path d="M12.5 5 L6.5 10.5 L12.5 16Z" fill="#707070"/></svg>
<div class="a" style="left:695px;top:976px;width:636px;height:21px;background:#f4f4f4;border-left:1px solid #b4b4b4;border-right:1px solid #b4b4b4;border-top:1px solid #c8c8c8"></div>
<div class="a" style="left:1821px;top:976px;width:21px;height:21px;background:#fdfdfd;border-top:1px solid #c8c8c8"></div>
<svg style="left:1821px;top:976px" width="21" height="21"><path d="M8 5 L14 10.5 L8 16Z" fill="#707070"/></svg>
<!-- page -->
<div class="a" style="left:488px;top:219px;width:1052px;height:745px;background:#fff;border:1px solid #bcbcbc"></div>
<div class="a" style="left:1539px;top:230px;width:7px;height:744px;background:#777"></div>
<div class="a" style="left:496px;top:963px;width:1050px;height:11px;background:#777"></div>

<svg style="left:0;top:0" width="1920" height="1080" font-family="Liberation Sans">
<line x1="580.5" y1="254" x2="580.5" y2="553" stroke="#d4d4d4" stroke-width="1.2"/>
<line x1="580" y1="254.5" x2="1521" y2="254.5" stroke="#d4d4d4" stroke-width="1.2"/>
<line x1="580" y1="552.5" x2="1521" y2="552.5" stroke="#d4d4d4" stroke-width="1.2"/>
<line x1="576.5" y1="254" x2="576.5" y2="553" stroke="#505050" stroke-width="1.2"/>
<line x1="571" y1="527.6" x2="577" y2="527.6" stroke="#505050" stroke-width="1"/>
<text x="569.5" y="532.8000000000001" font-size="12" fill="#000" text-anchor="end" >0.0</text>
<line x1="571" y1="493.05" x2="577" y2="493.05" stroke="#505050" stroke-width="1"/>
<text x="564.5" y="498.25" font-size="12" fill="#000" text-anchor="end" >2.0×10</text>
<text x="564.5" y="490.75" font-size="9.5" fill="#000" text-anchor="start" >8</text>
<line x1="571" y1="458.5" x2="577" y2="458.5" stroke="#505050" stroke-width="1"/>
<text x="564.5" y="463.7" font-size="12" fill="#000" text-anchor="end" >4.0×10</text>
<text x="564.5" y="456.2" font-size="9.5" fill="#000" text-anchor="start" >8</text>
<line x1="571" y1="423.95000000000005" x2="577" y2="423.95000000000005" stroke="#505050" stroke-width="1"/>
<text x="564.5" y="429.15000000000003" font-size="12" fill="#000" text-anchor="end" >6.0×10</text>
<text x="564.5" y="421.65000000000003" font-size="9.5" fill="#000" text-anchor="start" >8</text>
<line x1="571" y1="389.40000000000003" x2="577" y2="389.40000000000003" stroke="#505050" stroke-width="1"/>
<text x="564.5" y="394.6" font-size="12" fill="#000" text-anchor="end" >8.0×10</text>
<text x="564.5" y="387.1" font-size="9.5" fill="#000" text-anchor="start" >8</text>
<line x1="571" y1="354.85" x2="577" y2="354.85" stroke="#505050" stroke-width="1"/>
<text x="564.5" y="360.05" font-size="12" fill="#000" text-anchor="end" >1.0×10</text>
<text x="564.5" y="352.55" font-size="9.5" fill="#000" text-anchor="start" >9</text>
<line x1="571" y1="320.30000000000007" x2="577" y2="320.30000000000007" stroke="#505050" stroke-width="1"/>
<text x="564.5" y="325.50000000000006" font-size="12" fill="#000" text-anchor="end" >1.2×10</text>
<text x="564.5" y="318.00000000000006" font-size="9.5" fill="#000" text-anchor="start" >9</text>
<line x1="571" y1="285.75000000000006" x2="577" y2="285.75000000000006" stroke="#505050" stroke-width="1"/>
<text x="564.5" y="290.95000000000005" font-size="12" fill="#000" text-anchor="end" >1.4×10</text>
<text x="564.5" y="283.45000000000005" font-size="9.5" fill="#000" text-anchor="start" >9</text>
<line x1="573.5" y1="544.875" x2="577" y2="544.875" stroke="#505050" stroke-width="1"/>
<line x1="573.5" y1="510.32500000000005" x2="577" y2="510.32500000000005" stroke="#505050" stroke-width="1"/>
<line x1="573.5" y1="475.77500000000003" x2="577" y2="475.77500000000003" stroke="#505050" stroke-width="1"/>
<line x1="573.5" y1="441.225" x2="577" y2="441.225" stroke="#505050" stroke-width="1"/>
<line x1="573.5" y1="406.67500000000007" x2="577" y2="406.67500000000007" stroke="#505050" stroke-width="1"/>
<line x1="573.5" y1="372.12500000000006" x2="577" y2="372.12500000000006" stroke="#505050" stroke-width="1"/>
<line x1="573.5" y1="337.57500000000005" x2="577" y2="337.57500000000005" stroke="#505050" stroke-width="1"/>
<line x1="573.5" y1="303.0250000000001" x2="577" y2="303.0250000000001" stroke="#505050" stroke-width="1"/>
<line x1="573.5" y1="268.4750000000001" x2="577" y2="268.4750000000001" stroke="#505050" stroke-width="1"/>
<text x="0" y="0" font-size="12" fill="#000" text-anchor="middle" transform="translate(517,403.5) rotate(-90)">Intensity</text>
<line x1="580" y1="557.5" x2="1521" y2="557.5" stroke="#6a6a6a" stroke-width="2"/>
<line x1="632.75" y1="557" x2="632.75" y2="561" stroke="#505050" stroke-width="1.2"/>
<line x1="684.5999999999999" y1="557" x2="684.5999999999999" y2="563" stroke="#505050" stroke-width="1.2"/>
<text x="684.5999999999999" y="575" font-size="12" fill="#000" text-anchor="middle" >5</text>
<line x1="736.4499999999999" y1="557" x2="736.4499999999999" y2="561" stroke="#505050" stroke-width="1.2"/>
<line x1="788.3" y1="557" x2="788.3" y2="563" stroke="#505050" stroke-width="1.2"/>
<text x="788.3" y="575" font-size="12" fill="#000" text-anchor="middle" >10</text>
<line x1="840.15" y1="557" x2="840.15" y2="561" stroke="#505050" stroke-width="1.2"/>
<line x1="892.0" y1="557" x2="892.0" y2="563" stroke="#505050" stroke-width="1.2"/>
<text x="892.0" y="575" font-size="12" fill="#000" text-anchor="middle" >15</text>
<line x1="943.8499999999999" y1="557" x2="943.8499999999999" y2="561" stroke="#505050" stroke-width="1.2"/>
<line x1="995.6999999999999" y1="557" x2="995.6999999999999" y2="563" stroke="#505050" stroke-width="1.2"/>
<text x="995.6999999999999" y="575" font-size="12" fill="#000" text-anchor="middle" >20</text>
<line x1="1047.55" y1="557" x2="1047.55" y2="561" stroke="#505050" stroke-width="1.2"/>
<line x1="1099.4" y1="557" x2="1099.4" y2="563" stroke="#505050" stroke-width="1.2"/>
<text x="1099.4" y="575" font-size="12" fill="#000" text-anchor="middle" >25</text>
<line x1="1151.25" y1="557" x2="1151.25" y2="561" stroke="#505050" stroke-width="1.2"/>
<line x1="1203.1" y1="557" x2="1203.1" y2="563" stroke="#505050" stroke-width="1.2"/>
<text x="1203.1" y="575" font-size="12" fill="#000" text-anchor="middle" >30</text>
<line x1="1254.9499999999998" y1="557" x2="1254.9499999999998" y2="561" stroke="#505050" stroke-width="1.2"/>
<line x1="1306.8" y1="557" x2="1306.8" y2="563" stroke="#505050" stroke-width="1.2"/>
<text x="1306.8" y="575" font-size="12" fill="#000" text-anchor="middle" >35</text>
<line x1="1358.6499999999999" y1="557" x2="1358.6499999999999" y2="561" stroke="#505050" stroke-width="1.2"/>
<line x1="1410.5" y1="557" x2="1410.5" y2="563" stroke="#505050" stroke-width="1.2"/>
<text x="1410.5" y="575" font-size="12" fill="#000" text-anchor="middle" >40</text>
<line x1="1462.35" y1="557" x2="1462.35" y2="561" stroke="#505050" stroke-width="1.2"/>
<line x1="1514.1999999999998" y1="557" x2="1514.1999999999998" y2="563" stroke="#505050" stroke-width="1.2"/>
<text x="1514.1999999999998" y="575" font-size="12" fill="#000" text-anchor="middle" >45</text>
<line x1="581" y1="527.5" x2="1520" y2="527.5" stroke="#b04848" stroke-width="1.2"/>
<line x1="697.3" y1="279" x2="697.3" y2="527.5" stroke="#7a0303" stroke-width="1.5"/>
<text x="697" y="273.3" font-size="9.6" fill="#0c0c86" text-anchor="middle" stroke="#12128a" stroke-width="0.25">5.656</text>
<text x="593" y="519" font-size="9.6" fill="#0c0c86" text-anchor="start" stroke="#12128a" stroke-width="0.25">2.xx</text>
<rect x="507" y="238" width="1015" height="354" fill="none" stroke="#2a7af5" stroke-width="2"/>
<line x1="506.5" y1="598" x2="506.5" y2="946.5" stroke="#e4e4e4" stroke-width="1"/>
<line x1="506" y1="946.5" x2="1522" y2="946.5" stroke="#e4e4e4" stroke-width="1"/>
<line x1="1521.5" y1="592" x2="1521.5" y2="946.5" stroke="#e4e4e4" stroke-width="1"/>
<line x1="574" y1="608.5" x2="574" y2="906.5" stroke="#d4d4d4" stroke-width="1.5"/>
<line x1="573" y1="608.5" x2="1521" y2="608.5" stroke="#d4d4d4" stroke-width="1.2"/>
<line x1="573" y1="906.5" x2="1521" y2="906.5" stroke="#d4d4d4" stroke-width="1.2"/>
<line x1="570" y1="608.5" x2="570" y2="907" stroke="#505050" stroke-width="1.2"/>
<line x1="564" y1="881.3" x2="570.5" y2="881.3" stroke="#505050" stroke-width="1"/>
<text x="562.5" y="886.5" font-size="12" fill="#000" text-anchor="end" >0.0</text>
<line x1="564" y1="832.25" x2="570.5" y2="832.25" stroke="#505050" stroke-width="1"/>
<text x="557.5" y="837.45" font-size="12" fill="#000" text-anchor="end" >5.0×10</text>
<text x="557.5" y="829.95" font-size="9.5" fill="#000" text-anchor="start" >7</text>
<line x1="564" y1="783.1999999999999" x2="570.5" y2="783.1999999999999" stroke="#505050" stroke-width="1"/>
<text x="557.5" y="788.4" font-size="12" fill="#000" text-anchor="end" >1.0×10</text>
<text x="557.5" y="780.9" font-size="9.5" fill="#000" text-anchor="start" >8</text>
<line x1="564" y1="734.15" x2="570.5" y2="734.15" stroke="#505050" stroke-width="1"/>
<text x="557.5" y="739.35" font-size="12" fill="#000" text-anchor="end" >1.5×10</text>
<text x="557.5" y="731.85" font-size="9.5" fill="#000" text-anchor="start" >8</text>
<line x1="564" y1="685.0999999999999" x2="570.5" y2="685.0999999999999" stroke="#505050" stroke-width="1"/>
<text x="557.5" y="690.3" font-size="12" fill="#000" text-anchor="end" >2.0×10</text>
<text x="557.5" y="682.8" font-size="9.5" fill="#000" text-anchor="start" >8</text>
<line x1="564" y1="636.05" x2="570.5" y2="636.05" stroke="#505050" stroke-width="1"/>
<text x="557.5" y="641.25" font-size="12" fill="#000" text-anchor="end" >2.5×10</text>
<text x="557.5" y="633.75" font-size="9.5" fill="#000" text-anchor="start" >8</text>
<line x1="567" y1="905.8249999999999" x2="570.5" y2="905.8249999999999" stroke="#505050" stroke-width="1"/>
<line x1="567" y1="856.775" x2="570.5" y2="856.775" stroke="#505050" stroke-width="1"/>
<line x1="567" y1="807.725" x2="570.5" y2="807.725" stroke="#505050" stroke-width="1"/>
<line x1="567" y1="758.675" x2="570.5" y2="758.675" stroke="#505050" stroke-width="1"/>
<line x1="567" y1="709.625" x2="570.5" y2="709.625" stroke="#505050" stroke-width="1"/>
<line x1="567" y1="660.5749999999999" x2="570.5" y2="660.5749999999999" stroke="#505050" stroke-width="1"/>
<line x1="567" y1="611.525" x2="570.5" y2="611.525" stroke="#505050" stroke-width="1"/>
<line x1="573" y1="911.5" x2="1521" y2="911.5" stroke="#6a6a6a" stroke-width="2"/>
<line x1="573.552" y1="911" x2="573.552" y2="915" stroke="#505050" stroke-width="1.2"/>
<line x1="590.0" y1="911" x2="590.0" y2="917" stroke="#505050" stroke-width="1.2"/>
<text x="590.0" y="929.5" font-size="12" fill="#000" text-anchor="middle" >40</text>
<line x1="606.448" y1="911" x2="606.448" y2="915" stroke="#505050" stroke-width="1.2"/>
<line x1="622.896" y1="911" x2="622.896" y2="917" stroke="#505050" stroke-width="1.2"/>
<text x="622.896" y="929.5" font-size="12" fill="#000" text-anchor="middle" >60</text>
<line x1="639.344" y1="911" x2="639.344" y2="915" stroke="#505050" stroke-width="1.2"/>
<line x1="655.792" y1="911" x2="655.792" y2="917" stroke="#505050" stroke-width="1.2"/>
<text x="655.792" y="929.5" font-size="12" fill="#000" text-anchor="middle" >80</text>
<line x1="672.24" y1="911" x2="672.24" y2="915" stroke="#505050" stroke-width="1.2"/>
<line x1="688.688" y1="911" x2="688.688" y2="917" stroke="#505050" stroke-width="1.2"/>
<text x="688.688" y="929.5" font-size="12" fill="#000" text-anchor="middle" >100</text>
<line x1="705.136" y1="911" x2="705.136" y2="915" stroke="#505050" stroke-width="1.2"/>
<line x1="721.5840000000001" y1="911" x2="721.5840000000001" y2="917" stroke="#505050" stroke-width="1.2"/>
<text x="721.5840000000001" y="929.5" font-size="12" fill="#000" text-anchor="middle" >120</text>
<line x1="738.032" y1="911" x2="738.032" y2="915" stroke="#505050" stroke-width="1.2"/>
<line x1="754.48" y1="911" x2="754.48" y2="917" stroke="#505050" stroke-width="1.2"/>
<text x="754.48" y="929.5" font-size="12" fill="#000" text-anchor="middle" >140</text>
<line x1="770.928" y1="911" x2="770.928" y2="915" stroke="#505050" stroke-width="1.2"/>
<line x1="787.376" y1="911" x2="787.376" y2="917" stroke="#505050" stroke-width="1.2"/>
<text x="787.376" y="929.5" font-size="12" fill="#000" text-anchor="middle" >160</text>
<line x1="803.8240000000001" y1="911" x2="803.8240000000001" y2="915" stroke="#505050" stroke-width="1.2"/>
<line x1="820.2719999999999" y1="911" x2="820.2719999999999" y2="917" stroke="#505050" stroke-width="1.2"/>
<text x="820.2719999999999" y="929.5" font-size="12" fill="#000" text-anchor="middle" >180</text>
<line x1="836.72" y1="911" x2="836.72" y2="915" stroke="#505050" stroke-width="1.2"/>
<line x1="853.168" y1="911" x2="853.168" y2="917" stroke="#505050" stroke-width="1.2"/>
<text x="853.168" y="929.5" font-size="12" fill="#000" text-anchor="middle" >200</text>
<line x1="869.616" y1="911" x2="869.616" y2="915" stroke="#505050" stroke-width="1.2"/>
<line x1="886.0640000000001" y1="911" x2="886.0640000000001" y2="917" stroke="#505050" stroke-width="1.2"/>
<text x="886.0640000000001" y="929.5" font-size="12" fill="#000" text-anchor="middle" >220</text>
<line x1="902.512" y1="911" x2="902.512" y2="915" stroke="#505050" stroke-width="1.2"/>
<line x1="918.96" y1="911" x2="918.96" y2="917" stroke="#505050" stroke-width="1.2"/>
<text x="918.96" y="929.5" font-size="12" fill="#000" text-anchor="middle" >240</text>
<line x1="935.408" y1="911" x2="935.408" y2="915" stroke="#505050" stroke-width="1.2"/>
<line x1="951.856" y1="911" x2="951.856" y2="917" stroke="#505050" stroke-width="1.2"/>
<text x="951.856" y="929.5" font-size="12" fill="#000" text-anchor="middle" >260</text>
<line x1="968.3040000000001" y1="911" x2="968.3040000000001" y2="915" stroke="#505050" stroke-width="1.2"/>
<line x1="984.752" y1="911" x2="984.752" y2="917" stroke="#505050" stroke-width="1.2"/>
<text x="984.752" y="929.5" font-size="12" fill="#000" text-anchor="middle" >280</text>
<line x1="1001.2" y1="911" x2="1001.2" y2="915" stroke="#505050" stroke-width="1.2"/>
<line x1="1017.648" y1="911" x2="1017.648" y2="917" stroke="#505050" stroke-width="1.2"/>
<text x="1017.648" y="929.5" font-size="12" fill="#000" text-anchor="middle" >300</text>
<line x1="1034.096" y1="911" x2="1034.096" y2="915" stroke="#505050" stroke-width="1.2"/>
<line x1="1050.5439999999999" y1="911" x2="1050.5439999999999" y2="917" stroke="#505050" stroke-width="1.2"/>
<text x="1050.5439999999999" y="929.5" font-size="12" fill="#000" text-anchor="middle" >320</text>
<line x1="1066.992" y1="911" x2="1066.992" y2="915" stroke="#505050" stroke-width="1.2"/>
<line x1="1083.44" y1="911" x2="1083.44" y2="917" stroke="#505050" stroke-width="1.2"/>
<text x="1083.44" y="929.5" font-size="12" fill="#000" text-anchor="middle" >340</text>
<line x1="1099.888" y1="911" x2="1099.888" y2="915" stroke="#505050" stroke-width="1.2"/>
<line x1="1116.336" y1="911" x2="1116.336" y2="917" stroke="#505050" stroke-width="1.2"/>
<text x="1116.336" y="929.5" font-size="12" fill="#000" text-anchor="middle" >360</text>
<line x1="1132.784" y1="911" x2="1132.784" y2="915" stroke="#505050" stroke-width="1.2"/>
<line x1="1149.232" y1="911" x2="1149.232" y2="917" stroke="#505050" stroke-width="1.2"/>
<text x="1149.232" y="929.5" font-size="12" fill="#000" text-anchor="middle" >380</text>
<line x1="1165.68" y1="911" x2="1165.68" y2="915" stroke="#505050" stroke-width="1.2"/>
<line x1="1182.1280000000002" y1="911" x2="1182.1280000000002" y2="917" stroke="#505050" stroke-width="1.2"/>
<text x="1182.1280000000002" y="929.5" font-size="12" fill="#000" text-anchor="middle" >400</text>
<line x1="1198.576" y1="911" x2="1198.576" y2="915" stroke="#505050" stroke-width="1.2"/>
<line x1="1215.024" y1="911" x2="1215.024" y2="917" stroke="#505050" stroke-width="1.2"/>
<text x="1215.024" y="929.5" font-size="12" fill="#000" text-anchor="middle" >420</text>
<line x1="1231.472" y1="911" x2="1231.472" y2="915" stroke="#505050" stroke-width="1.2"/>
<line x1="1247.92" y1="911" x2="1247.92" y2="917" stroke="#505050" stroke-width="1.2"/>
<text x="1247.92" y="929.5" font-size="12" fill="#000" text-anchor="middle" >440</text>
<line x1="1264.368" y1="911" x2="1264.368" y2="915" stroke="#505050" stroke-width="1.2"/>
<line x1="1280.816" y1="911" x2="1280.816" y2="917" stroke="#505050" stroke-width="1.2"/>
<text x="1280.816" y="929.5" font-size="12" fill="#000" text-anchor="middle" >460</text>
<line x1="1297.2640000000001" y1="911" x2="1297.2640000000001" y2="915" stroke="#505050" stroke-width="1.2"/>
<line x1="1313.712" y1="911" x2="1313.712" y2="917" stroke="#505050" stroke-width="1.2"/>
<text x="1313.712" y="929.5" font-size="12" fill="#000" text-anchor="middle" >480</text>
<line x1="1330.1599999999999" y1="911" x2="1330.1599999999999" y2="915" stroke="#505050" stroke-width="1.2"/>
<line x1="1346.6080000000002" y1="911" x2="1346.6080000000002" y2="917" stroke="#505050" stroke-width="1.2"/>
<text x="1346.6080000000002" y="929.5" font-size="12" fill="#000" text-anchor="middle" >500</text>
<line x1="1363.056" y1="911" x2="1363.056" y2="915" stroke="#505050" stroke-width="1.2"/>
<line x1="1379.504" y1="911" x2="1379.504" y2="917" stroke="#505050" stroke-width="1.2"/>
<text x="1379.504" y="929.5" font-size="12" fill="#000" text-anchor="middle" >520</text>
<line x1="1395.952" y1="911" x2="1395.952" y2="915" stroke="#505050" stroke-width="1.2"/>
<line x1="1412.4" y1="911" x2="1412.4" y2="917" stroke="#505050" stroke-width="1.2"/>
<text x="1412.4" y="929.5" font-size="12" fill="#000" text-anchor="middle" >540</text>
<line x1="1428.848" y1="911" x2="1428.848" y2="915" stroke="#505050" stroke-width="1.2"/>
<line x1="1445.296" y1="911" x2="1445.296" y2="917" stroke="#505050" stroke-width="1.2"/>
<text x="1445.296" y="929.5" font-size="12" fill="#000" text-anchor="middle" >560</text>
<line x1="1461.7440000000001" y1="911" x2="1461.7440000000001" y2="915" stroke="#505050" stroke-width="1.2"/>
<line x1="1478.192" y1="911" x2="1478.192" y2="917" stroke="#505050" stroke-width="1.2"/>
<text x="1478.192" y="929.5" font-size="12" fill="#000" text-anchor="middle" >580</text>
<line x1="1494.6399999999999" y1="911" x2="1494.6399999999999" y2="915" stroke="#505050" stroke-width="1.2"/>
<line x1="1511.088" y1="911" x2="1511.088" y2="917" stroke="#505050" stroke-width="1.2"/>
<text x="1511.088" y="929.5" font-size="12" fill="#000" text-anchor="middle" >600</text>
<text x="1046.5" y="945" font-size="12" fill="#000" text-anchor="middle" >m/z (Da)</text>
<line x1="574" y1="881.5" x2="1521" y2="881.5" stroke="#cfcfcf" stroke-width="1"/>
<line x1="585.5" y1="878" x2="585.5" y2="881.5" stroke="#7a0303" stroke-width="1.25"/>
<line x1="588.5" y1="801.2" x2="588.5" y2="881.5" stroke="#7a0303" stroke-width="1.25"/>
<line x1="590.5" y1="865" x2="590.5" y2="881.5" stroke="#7a0303" stroke-width="1.25"/>
<line x1="592.5" y1="734.5" x2="592.5" y2="881.5" stroke="#7a0303" stroke-width="1.25"/>
<line x1="593.5" y1="831.2" x2="593.5" y2="881.5" stroke="#7a0303" stroke-width="1.25"/>
<line x1="595.5" y1="633.4" x2="595.5" y2="881.5" stroke="#7a0303" stroke-width="1.25"/>
<line x1="597.5" y1="873.3" x2="597.5" y2="881.5" stroke="#7a0303" stroke-width="1.25"/>
<line x1="598.5" y1="877" x2="598.5" y2="881.5" stroke="#7a0303" stroke-width="1.25"/>
<line x1="606.5" y1="878.8" x2="606.5" y2="881.5" stroke="#7a0303" stroke-width="1.25"/>
<line x1="608.5" y1="873.8" x2="608.5" y2="881.5" stroke="#7a0303" stroke-width="1.25"/>
<line x1="610.5" y1="878" x2="610.5" y2="881.5" stroke="#7a0303" stroke-width="1.25"/>
<line x1="611.5" y1="856.2" x2="611.5" y2="881.5" stroke="#7a0303" stroke-width="1.25"/>
<line x1="613.5" y1="875" x2="613.5" y2="881.5" stroke="#7a0303" stroke-width="1.25"/>
<line x1="615.5" y1="762" x2="615.5" y2="881.5" stroke="#7a0303" stroke-width="1.25"/>
<line x1="616.5" y1="823" x2="616.5" y2="881.5" stroke="#7a0303" stroke-width="1.25"/>
<line x1="618.5" y1="828.3" x2="618.5" y2="881.5" stroke="#7a0303" stroke-width="1.25"/>
<line x1="620.5" y1="878" x2="620.5" y2="881.5" stroke="#7a0303" stroke-width="1.25"/>
<line x1="626.5" y1="879" x2="626.5" y2="881.5" stroke="#7a0303" stroke-width="1.25"/>
<line x1="628.5" y1="878.5" x2="628.5" y2="881.5" stroke="#7a0303" stroke-width="1.25"/>
<line x1="631.5" y1="873.3" x2="631.5" y2="881.5" stroke="#7a0303" stroke-width="1.25"/>
<line x1="633.5" y1="878" x2="633.5" y2="881.5" stroke="#7a0303" stroke-width="1.25"/>
<line x1="634.5" y1="855" x2="634.5" y2="881.5" stroke="#7a0303" stroke-width="1.25"/>
<line x1="636.5" y1="847" x2="636.5" y2="881.5" stroke="#7a0303" stroke-width="1.25"/>
<line x1="637.5" y1="824.5" x2="637.5" y2="881.5" stroke="#7a0303" stroke-width="1.25"/>
<line x1="639.5" y1="660" x2="639.5" y2="881.5" stroke="#7a0303" stroke-width="1.25"/>
<line x1="641.5" y1="825" x2="641.5" y2="881.5" stroke="#7a0303" stroke-width="1.25"/>
<line x1="643.5" y1="878" x2="643.5" y2="881.5" stroke="#7a0303" stroke-width="1.25"/>
<line x1="647.5" y1="880" x2="647.5" y2="881.5" stroke="#7a0303" stroke-width="1.25"/>
<line x1="651.5" y1="874.2" x2="651.5" y2="881.5" stroke="#7a0303" stroke-width="1.25"/>
<line x1="654.5" y1="872.5" x2="654.5" y2="881.5" stroke="#7a0303" stroke-width="1.25"/>
<line x1="657.5" y1="876" x2="657.5" y2="881.5" stroke="#7a0303" stroke-width="1.25"/>
<line x1="659.5" y1="878" x2="659.5" y2="881.5" stroke="#7a0303" stroke-width="1.25"/>
<line x1="661.5" y1="816.3" x2="661.5" y2="881.5" stroke="#7a0303" stroke-width="1.25"/>
<line x1="662.5" y1="866.7" x2="662.5" y2="881.5" stroke="#7a0303" stroke-width="1.25"/>
<line x1="664.5" y1="880" x2="664.5" y2="881.5" stroke="#7a0303" stroke-width="1.25"/>
<line x1="674.5" y1="876.5" x2="674.5" y2="881.5" stroke="#7a0303" stroke-width="1.25"/>
<line x1="678.5" y1="879" x2="678.5" y2="881.5" stroke="#7a0303" stroke-width="1.25"/>
<line x1="681.5" y1="877.5" x2="681.5" y2="881.5" stroke="#7a0303" stroke-width="1.25"/>
<line x1="683.5" y1="878.5" x2="683.5" y2="881.5" stroke="#7a0303" stroke-width="1.25"/>
<line x1="686.5" y1="878.5" x2="686.5" y2="881.5" stroke="#7a0303" stroke-width="1.25"/>
<line x1="697.5" y1="880" x2="697.5" y2="881.5" stroke="#7a0303" stroke-width="1.25"/>
<line x1="707.5" y1="877" x2="707.5" y2="881.5" stroke="#7a0303" stroke-width="1.25"/>
<line x1="732.5" y1="854.5" x2="732.5" y2="881.5" stroke="#7a0303" stroke-width="1.25"/>
<line x1="734.5" y1="878" x2="734.5" y2="881.5" stroke="#7a0303" stroke-width="1.25"/>
<line x1="602.5" y1="880.3" x2="602.5" y2="881.5" stroke="#b05050" stroke-width="1"/>
<line x1="622.5" y1="880.3" x2="622.5" y2="881.5" stroke="#b05050" stroke-width="1"/>
<line x1="645.5" y1="880.3" x2="645.5" y2="881.5" stroke="#b05050" stroke-width="1"/>
<line x1="667.5" y1="880.3" x2="667.5" y2="881.5" stroke="#b05050" stroke-width="1"/>
<line x1="691.5" y1="880.3" x2="691.5" y2="881.5" stroke="#b05050" stroke-width="1"/>
<line x1="701.5" y1="880.3" x2="701.5" y2="881.5" stroke="#b05050" stroke-width="1"/>
<line x1="712.5" y1="880.3" x2="712.5" y2="881.5" stroke="#b05050" stroke-width="1"/>
<line x1="720.5" y1="880.3" x2="720.5" y2="881.5" stroke="#b05050" stroke-width="1"/>
<line x1="738.5" y1="880.3" x2="738.5" y2="881.5" stroke="#b05050" stroke-width="1"/>
<text x="595.5" y="618.6" font-size="10.2" fill="#0c0c86" text-anchor="middle" >43.042</text>
<text x="595.5" y="629.2" font-size="10.2" fill="#0c0c86" text-anchor="middle" >100.00%</text>
<text x="614.5" y="745.6" font-size="10.2" fill="#0c0c86" text-anchor="middle" >55.059</text>
<text x="614.5" y="756.2" font-size="10.2" fill="#0c0c86" text-anchor="middle" >48.14%</text>
<text x="660.8" y="799.9" font-size="10.2" fill="#0c0c86" text-anchor="middle" >83.107</text>
<text x="660.8" y="810.5" font-size="10.2" fill="#0c0c86" text-anchor="middle" >26.25%</text>
<text x="684.2" y="862.9" font-size="10.2" fill="#0c0c86" text-anchor="middle" >97.121</text>
<text x="684.2" y="873.5" font-size="10.2" fill="#0c0c86" text-anchor="middle" >1.03%</text>
<text x="731.7" y="837.9" font-size="10.2" fill="#0c0c86" text-anchor="middle" >126.187</text>
<text x="731.7" y="848.5" font-size="10.2" fill="#0c0c86" text-anchor="middle" >11.02%</text>
<text x="506.5" y="251.5" font-size="11.95" fill="#000" text-anchor="start" >C:\MnovaDemo\2...2PP 700_122.cdf Injection 1 Function 1 TIC</text>
<text x="506.5" y="605" font-size="11.95" fill="#000" text-anchor="start" >C:\MnovaDemo\2...2PP 700_122.cdf Injection 1 Function 1 Scan</text>
<rect x="1009.5" y="207.5" width="9" height="9" fill="#00ff00" stroke="#1ec81e" stroke-width="1"/>
<rect x="501.5" y="232.5" width="9" height="9" fill="#00ff00" stroke="#1ec81e" stroke-width="1"/>
<rect x="1009.5" y="232.5" width="9" height="9" fill="#00ff00" stroke="#1ec81e" stroke-width="1"/>
<rect x="1517.5" y="232.5" width="9" height="9" fill="#00ff00" stroke="#1ec81e" stroke-width="1"/>
<rect x="501.5" y="587.5" width="9" height="9" fill="#00ff00" stroke="#1ec81e" stroke-width="1"/>
<rect x="1517.5" y="587.5" width="9" height="9" fill="#00ff00" stroke="#1ec81e" stroke-width="1"/>
<rect x="501.5" y="941.5" width="9" height="9" fill="#00ff00" stroke="#1ec81e" stroke-width="1"/>
<rect x="1009.5" y="941.5" width="9" height="9" fill="#00ff00" stroke="#1ec81e" stroke-width="1"/>
<rect x="1517.5" y="941.5" width="9" height="9" fill="#00ff00" stroke="#1ec81e" stroke-width="1"/>
</svg>
<div class="a" style="left:1866px;top:174px;width:54px;height:826px;background:#eeeeee"></div><div class="a" style="left:1866px;top:203px;width:1px;height:797px;background:#c9c9c9"></div>
<svg style="left:1866px;top:174px" width="54" height="826">
<g transform="translate(-1866,-174)">
<path d="M1873 180 H1915" stroke="#111" stroke-width="2" stroke-dasharray="2,2"/>
<!-- zoom + -->
<g transform="translate(1893,200)"><circle cx="-3" cy="-2" r="4.5" fill="#a9cdf7"/><path d="M-3 -6.5 A4.5 4.5 0 0 0 -3 2.5Z" fill="#dbeafc"/><path d="M0.5 2 L4.5 6" stroke="#c0661a" stroke-width="2"/><path d="M3.5 -8 V-1 M0 -4.5 H7" stroke="#c01010" stroke-width="2.4"/></g>
<g transform="translate(1893,227)"><circle cx="-3" cy="-2" r="4.5" fill="#a9cdf7"/><path d="M-3 -6.5 A4.5 4.5 0 0 0 -3 2.5Z" fill="#dbeafc"/><path d="M0.5 2 L4.5 6" stroke="#c0661a" stroke-width="2"/><path d="M0 -4.5 H7" stroke="#c01010" stroke-width="2.4"/></g>
<g transform="translate(1893,253)"><circle cx="-1.5" cy="-4" r="4.5" fill="#a9cdf7"/><path d="M2 0 L5.5 4" stroke="#c0661a" stroke-width="2"/><path d="M-8 0.5h2.5v2.5h-2.5z M-4 0.5h2.5v2.5h-2.5z M-8 4.5h2.5v2.5h-2.5z M-4 4.5h2.5v2.5h-2.5z" fill="#b01818"/></g>
<g transform="translate(1893,278)"><circle cx="-3" cy="-3" r="4.5" fill="#a9cdf7"/><path d="M0.5 1 L4.5 5" stroke="#e0a070" stroke-width="3"/><path d="M3 0 L7 -5 L7 3Z" fill="#e01010"/></g>
<g transform="translate(1893,303)"><path d="M-6 -1 C-6 -6 -3 -7 0 -7 C3 -7 5 -5 4 -1 L4 3 L-3 4 Z" fill="#f0b080" stroke="#b07040" stroke-width="0.6"/><path d="M4.5 -1 V9 M-0.5 4 H9.5" stroke="#b01818" stroke-width="2"/><path d="M4.5 -2.5 L2.5 0 H6.5Z M4.5 10.5 L2.5 8 H6.5Z M-2 4 L0.5 2 V6Z M11 4 L8.5 2 V6Z" fill="#b01818"/></g>
<g transform="translate(1893,330)"><rect x="-9" y="-4" width="18" height="12" fill="#fff" stroke="#999" stroke-width="0.8"/><rect x="-5" y="-8" width="11" height="7" fill="#fff" stroke="#999" stroke-width="0.8"/><path d="M-3.5 -4.5 L-2 -4.5 L-1 -6.5 L0.5 -3 L1.5 -5 L4 -4.5" stroke="#b01818" stroke-width="0.8" fill="none"/><path d="M-7 2 H-3" stroke="#d04040" stroke-width="0.8"/><circle cx="0.5" cy="1.5" r="2.5" fill="#a9cdf7"/><path d="M2.5 3.5 L6 7" stroke="#c0661a" stroke-width="1.6"/></g>
<path d="M1872 346.5 H1915" stroke="#cfcfcf" stroke-width="1"/>
<g transform="translate(1893,363)" fill="#c4c4c4"><circle cx="-1.5" cy="-4" r="4" fill="#d6d6d6"/><path d="M-8 3 L-4 0 L-4 6Z"/><path d="M1 0 L5 4" stroke="#bdbdbd" stroke-width="2"/></g>
<g transform="translate(1893,389)" fill="#c4c4c4"><circle cx="1.5" cy="-4" r="4" fill="#d6d6d6"/><path d="M8 3 L4 0 L4 6Z"/><path d="M-1 0 L-5 4" stroke="#bdbdbd" stroke-width="2"/></g>
<path d="M1872 405.5 H1915" stroke="#cfcfcf" stroke-width="1"/>
<g transform="translate(1893,421)"><path d="M-9 7 H-6.5 C-5.5 7 -5.5 -0.5 -5 -0.5 C-4.5 -0.5 -4.5 7 -2.5 7" stroke="#1d4a9a" stroke-width="1.2" fill="none"/><path d="M-2.5 7 C-1 7 -1.5 -6 -1 -6 C-0.5 -6 -1 7 0.5 7 H1" stroke="#c01818" stroke-width="1.2" fill="none"/><path d="M3 -5.5 H6 M4.5 -5.5 V7 M3 7 H6" stroke="#b01818" stroke-width="1.3"/></g>
<g transform="translate(1893,448)"><path d="M-9 7 H-6.5 C-5.5 7 -5.5 -0.5 -5 -0.5 C-4.5 -0.5 -4.5 7 -2.5 7 C-1 7 -1.5 -6 -1 -6 C-0.5 -6 -1 7 0.5 7 H1" stroke="#999" stroke-width="1.2" fill="none"/><path d="M3 -2 H6 M4.5 -2 V7 M3 7 H6" stroke="#999" stroke-width="1.3"/></g>
<g transform="translate(1893,474)"><path d="M-9 7 C-5 7 -4.5 5 -3.5 0 C-3 -3 -2.5 -6 -2 -6 C-1.5 -6 -1 -3 -0.5 0 C0.5 5 1 7 5 7" stroke="#1d4a9a" stroke-width="1.3" fill="none"/><path d="M2.5 -8 L6.5 -3.5 H4.2 V0 H0.8 V-3.5 H-1.5Z" fill="#e01010"/></g>
<g transform="translate(1893,501)"><path d="M-9 7 C-5 7 -4.5 5 -3.5 2.5 C-3 1 -2.5 -1 -2 -1 C-1.5 -1 -1 1 -0.5 2.5 C0.5 5 1 7 5 7" stroke="#1d4a9a" stroke-width="1.3" fill="none"/><path d="M2.5 -1.5 L6.5 -6 H4.2 V-9.5 H0.8 V-6 H-1.5Z" fill="#e01010"/></g>
<path d="M1872 516.5 H1915" stroke="#cfcfcf" stroke-width="1"/>
<path d="M1893 522 V530.5 M1893 534.5 V543 M1882.5 532.5 H1891 M1895 532.5 H1903.5" stroke="#2b5aa8" stroke-width="1.6"/>
<path d="M1872 549.5 H1915" stroke="#cfcfcf" stroke-width="1"/>
<g transform="translate(1888,565)"><path d="M-10 7 H-3" stroke="#1d4a9a" stroke-width="1.2"/><path d="M-2 7 C1 7 1.5 4 2.5 -1 C3 -4 3.5 -6.5 4 -6.5 C4.5 -6.5 5 -4 5.5 -1 C6.5 4 7 7 9 7" stroke="#1d4a9a" stroke-width="1.3" fill="none"/><circle cx="-7" cy="-4.5" r="2" fill="none" stroke="#e01010" stroke-width="1.1"/><circle cx="0" cy="-4.5" r="2" fill="none" stroke="#e01010" stroke-width="1.1"/><path d="M-6 -2.5 L-3 6 M-1 -2.5 L-4 6" stroke="#bbb" stroke-width="1"/></g>
<path d="M1897.5 564 L1904.5 564 L1901 568Z" fill="#777"/>
<g transform="translate(1887,597)"><rect x="-8.5" y="-7" width="17" height="13" fill="#fff" stroke="#888" stroke-width="1"/><rect x="1" y="-6" width="6" height="11" fill="#a9c4e8"/><path d="M-7 4 H-5.5 L-5 -2 L-4.3 4 L-3.5 -4 L-2.8 4 L-1.5 1 L-0.5 4 H7" stroke="#8a1010" stroke-width="0.9" fill="none"/><path d="M2 4 L3 -3 L4 4" stroke="#1d3a80" stroke-width="0.9" fill="none"/></g>
<path d="M1907 596 L1914 596 L1910.5 600Z" fill="#777"/>
<path d="M1872 618.5 H1915" stroke="#cfcfcf" stroke-width="1"/>
<g transform="translate(1882,635)"><rect x="-8.5" y="-8.5" width="17" height="17" fill="#fff" stroke="#888" stroke-width="1.2"/><path d="M-6 -6 L6 6 M6 -6 L-6 6" stroke="#c8c8c8" stroke-width="3"/><circle r="3" fill="#b0b0b0"/></g>
<path d="M1897.5 634 L1904.5 634 L1901 637.5Z" fill="#bbb"/>
<g transform="translate(1882,660)"><rect x="-2" y="-9" width="11" height="18" fill="#fff" stroke="#2b5aa8" stroke-width="1"/><rect x="-9" y="-3" width="7" height="12" fill="#fff" stroke="#2b5aa8" stroke-width="1"/><path d="M0 -5 L1.5 -7.5 L3 -5 M4 -5 L5.5 -7.5 L7 -5" stroke="#c01818" stroke-width="0.9" fill="none"/><circle cx="3.5" cy="3" r="3.8" fill="#f8d020"/><circle cx="3.5" cy="3" r="1.8" fill="#e03010"/><path d="M-7 0 L-5 1.5 L-7 3 M-7 4.5 L-5 6 L-7 7.5" stroke="#c01818" stroke-width="0.8" fill="none"/></g>
<path d="M1897.5 659 L1904.5 659 L1901 662.5Z" fill="#777"/>
<path d="M1872 677.5 H1915" stroke="#cfcfcf" stroke-width="1"/>
<g transform="translate(1893,693.5)"><path d="M0 -7.5 L8 -3.5 V4 L0 8 L-8 4 V-3.5Z" fill="#d6d6d6" stroke="#aaa" stroke-width="0.9"/><path d="M-8 -3.5 L0 0.5 L8 -3.5 M0 0.5 V8" stroke="#aaa" stroke-width="0.9" fill="none"/><path d="M0 0.5 L8 -3.5 V4 L0 8Z" fill="#e6e6e6"/></g>
<g fill="#a8a8a8">
<rect x="1884" y="710.5" width="18" height="1.8"/>
<path d="M1893 714.5 C1896 717.5 1899 721.5 1900.5 727.5 C1896 728.8 1890 728.8 1885.5 727.5 C1887 721.5 1890 717.5 1893 714.5Z"/>
<path d="M1893 738 C1896 741 1899 745 1900.5 750.5 C1896 751.8 1890 751.8 1885.5 750.5 C1887 745 1890 741 1893 738Z"/>
<path d="M1893 779 C1896 776 1899 772 1900.5 766.5 C1896 765.2 1890 765.2 1885.5 766.5 C1887 772 1890 776 1893 779Z"/>
<path d="M1893 802.5 C1896 799.5 1899 795.5 1900.5 790 C1896 788.7 1890 788.7 1885.5 790 C1887 795.5 1890 799.5 1893 802.5Z"/>
<rect x="1884" y="805" width="18" height="1.8"/>
</g>
<g transform="translate(1880,822)"><path d="M-6 -4.5 H4 V7 H-6Z" fill="#e2e2e2" stroke="#8a8a8a" stroke-width="1.1"/><path d="M-6 -4.5 L-3 -7.5 H7 V4 L4 7 M4 -4.5 L7 -7.5" stroke="#8a8a8a" stroke-width="1.1" fill="none"/><text x="-3" y="12" font-size="13" font-weight="bold" fill="#bdbdbd" font-family="Liberation Sans">32</text></g>
<path d="M1897.5 822 L1904.5 822 L1901 825.5Z" fill="#c4c4c4"/>
</g>
</svg>

<div class="a" style="left:0;top:1001px;width:1920px;height:29px;background:#f3f3f3"></div>
<div class="t" style="left:1613px;top:1009px;font-size:14.2px;font-weight:bold;color:#333">Signature:</div>
<div class="t" style="left:1767px;top:1009px;font-size:13.5px;font-weight:bold;color:#333">Licenses:</div>
<div class="t" style="left:1864px;top:1009px;font-size:13.5px;font-weight:bold;color:#333">DB:</div>
<svg style="left:1690px;top:1005px" width="230" height="25">
<path d="M7.5 1.5 H17 V19 H7.5Z" fill="#f4f4f4" stroke="#888" stroke-width="0.9"/>
<path d="M9 5H13M9 7.5H14M9 10H14" stroke="#777" stroke-width="0.9"/>
<path d="M9 16 L10.5 14 L12 16 L13.5 14.5 L15 15.5" stroke="#2050a0" stroke-width="0.9" fill="none"/>
<path d="M15 5 L22.8 12 M22.8 5 L15 12" stroke="#d01010" stroke-width="2.8"/>
<rect x="36" y="5" width="17" height="12" fill="#f4f4f4" stroke="#999" stroke-width="1"/>
<path d="M42 5 V2.5 H47 V5" stroke="#999" stroke-width="1.2" fill="none"/>
<circle cx="40.5" cy="10" r="1.6" fill="#999"/><path d="M38 14.5 H43 M45 9.5 H51 M45 12.5 H51" stroke="#999" stroke-width="1"/>
<circle cx="156" cy="11" r="10" fill="#f1ea28"/>
<path d="M154.3 4.5 H157.7 L156.8 13.5 H155.2Z" fill="#5a4a10"/><circle cx="156" cy="16.3" r="1.7" fill="#5a4a10"/>
<g transform="translate(2,0)"><path d="M208 5 V14 C208 17 222 17 222 14 V5" fill="#0d3f8a"/><ellipse cx="215" cy="5" rx="7" ry="2.6" fill="#3567b0"/>
<path d="M215 17 V21 M206 21.5 H224" stroke="#5590e0" stroke-width="1.3"/>
<circle cx="222" cy="4.5" r="5" fill="#1fb030" stroke="#fff" stroke-width="0.8"/>
<path d="M219.5 4.5 L221.5 6.5 L224.7 2.8" stroke="#fff" stroke-width="1.4" fill="none"/></g>
</svg>

<div class="a" style="left:0;top:1030px;width:1920px;height:50px;background:linear-gradient(90deg,#1c2231 0,#1c2231 1370px,#444444 1455px,#444444 100%)"></div>
<div class="a" style="left:0;top:1030px;width:60px;height:50px;background:#243540"></div>
<svg style="left:0;top:1030px" width="60" height="50"><path d="M19.7 17.7 L27.7 16.6 V24.4 H19.7Z M29.4 16.3 L40.1 14.8 V24.4 H29.4Z M19.7 26.1 H27.7 V33.8 L19.7 32.7Z M29.4 26.1 H40.1 V35.4 L29.4 34Z" fill="#fff"/></svg>
<div class="a" style="left:60px;top:1030px;width:360px;height:50px;background:#f0f0f0;border-top:1px solid #c4c4c4"></div>
<svg style="left:60px;top:1030px" width="360" height="50">
<circle cx="27.9" cy="21.7" r="6.4" fill="none" stroke="#111" stroke-width="1.3"/>
<path d="M23.3 26.3 L15.2 34.5" stroke="#111" stroke-width="1.4"/>
<rect x="265.4" y="5" width="89.6" height="39.6" rx="4" fill="#e2e2e2"/>
<path d="M303.5 13.5 V10.5 C303.5 9.5 304 9 305 9 H311.5 C312.5 9 313 9.5 313 10.5 V13.5" stroke="#222" stroke-width="2" fill="none"/>
<rect x="290.8" y="14.2" width="38.2" height="25.6" rx="2" fill="#dd8a08"/>
<rect x="290.8" y="14.2" width="38.2" height="13.5" rx="2" fill="#f29e0c"/>
<rect x="290.8" y="26" width="38.2" height="2" fill="#a85d05"/>
<rect x="306.5" y="24.5" width="7" height="6.5" rx="1" fill="#f6d21a"/>
</svg>
<div class="t" style="left:110px;top:1046.5px;font-size:18.5px;color:#222">Type here to search</div>
<svg style="left:430px;top:1030px" width="440" height="50">
<path d="M10.5 15 V17 H22.5 V15 M10.5 34 V32 H22.5 V34 M10.5 20 H22.5 V29 H10.5Z" stroke="#fff" stroke-width="1.3" fill="none"/>
<path d="M27 15 V34" stroke="#fff" stroke-width="1.3"/><rect x="25.3" y="21" width="3.4" height="3.4" fill="#fff"/>
<path d="M69.2 19.6 L84.1 11 L99 19.6Z" fill="#0b5fc0"/>
<rect x="69.2" y="19.6" width="29.8" height="19.5" fill="#1b9be8"/>
<path d="M69.2 19.6 L84.1 28.5 L99 19.6 V39.1 H69.2Z" fill="#21a6f0"/>
<path d="M72 20.3 H97 L84.1 28.5Z" fill="#f4f4f4"/>
<circle cx="99.5" cy="34.2" r="10.2" fill="#2b2f36" stroke="#9a9ca0" stroke-width="1"/>
<text x="99.5" y="39.6" font-size="14" fill="#fff" text-anchor="middle" font-family="Liberation Sans">10</text>
<defs><linearGradient id="edg" x1="131" y1="30" x2="161" y2="14" gradientUnits="userSpaceOnUse"><stop offset="0" stop-color="#1a86d8"/><stop offset="0.55" stop-color="#2fb8e0"/><stop offset="1" stop-color="#6ee05a"/></linearGradient></defs><path d="M131 27 C131 15 140 10 146 10 C154 10 161 15 161 22 C161 28 156 30 152 30 C148 30 146 28 146 26 C146 24 148 23 149 23 C146 19 139 20 136 26 C134 32 137 38 145 40 C138 40 131 35 131 27Z" fill="url(#edg)"/>

<path d="M136 26 C134 32 137 38 145 40 C152 40 157 37 159 33 C155 36 148 37 143 34 C139 32 137 29 136 26Z" fill="#1358a0"/>
<rect x="131" y="28.3" width="15" height="11.7" rx="1" fill="#a85f08"/><rect x="131" y="28.3" width="15" height="6" fill="#f09a10"/><circle cx="138.5" cy="35" r="0.9" fill="#f6d21a"/>
<path d="M194 12.5 H204 L206 15 H221.5 V35.6 H194Z" fill="#f6c342"/>
<rect x="194" y="17" width="27.5" height="18.6" fill="#fbd86a"/>
<path d="M199.5 35.6 V27 H216 V35.6 M203 35.6 V30 H212.5 V35.6" fill="#3a8ee0"/>
<rect x="254.6" y="15" width="29.3" height="25" rx="3" fill="#f6f6f6"/>
<path d="M262 15 V11.5 C262 10.5 263 10 264 10 H274.5 C275.5 10 276.5 10.5 276.5 11.5 V15" stroke="#3aa0e8" stroke-width="2" fill="none"/>
<rect x="262.8" y="22" width="5.8" height="5.8" fill="#f25022"/><rect x="269.6" y="22" width="5.8" height="5.8" fill="#7fba00"/>
<rect x="262.8" y="28.8" width="5.8" height="5.8" fill="#00a4ef"/><rect x="269.6" y="28.8" width="5.8" height="5.8" fill="#ffb900"/>
</svg>
<div class="a" style="left:732px;top:1030px;width:61px;height:50px;background:linear-gradient(180deg,#5d5f63,#55575b)"></div>
<svg style="left:730px;top:1030px" width="140" height="50">
<polygon points="32,10.5 44,17.5 44,31.5 32,38.5 20,31.5 20,17.5" fill="#c0111a"/>
<path d="M26.5 31.5 L29 20 L33 27 L36.5 20.5 L37.5 26" stroke="#fff" stroke-width="3.4" fill="none" stroke-linejoin="round" stroke-linecap="round"/>
<rect x="91" y="11" width="18" height="27" fill="#1f8fe0"/>
<path d="M91 22 H109 V38 H91Z" fill="#0a64b8"/><path d="M99 11 H108.5 V22 H99Z" fill="#50c8f8"/>
<rect x="78.5" y="17.5" width="16" height="16" rx="1.5" fill="#0f6cc0"/>
<ellipse cx="86.5" cy="25.5" rx="4" ry="4.6" fill="none" stroke="#fff" stroke-width="1.8"/>
</svg>
<div class="a" style="left:551px;top:1077px;width:51px;height:3px;background:#76b9ed"></div>
<div class="a" style="left:732px;top:1077px;width:61px;height:3px;background:#76b9ed"></div>
<div class="a" style="left:799px;top:1077px;width:51px;height:3px;background:#76b9ed"></div>
<svg style="left:1478px;top:1030px" width="40" height="50">
<path d="M5 12.5 C10 18 15 21 24 24" stroke="#d83a10" stroke-width="2.8" fill="none" stroke-linecap="round"/>
<path d="M21 18.5 L30 25.5 L20 29Z" fill="#d83a10"/>
<rect x="2.6" y="24" width="3.6" height="14" rx="1" fill="#d83a10"/><rect x="8.6" y="29.5" width="3.6" height="8.5" rx="1" fill="#d83a10"/>
<rect x="14.6" y="33" width="3.6" height="5" rx="1" fill="#d83a10"/><rect x="20.6" y="35.5" width="3.6" height="2.5" rx="1" fill="#d83a10"/>
</svg>
<div class="t" style="left:1518.5px;top:1047px;font-size:17px;color:#fff">NASDAQ</div>
<div class="t" style="left:1601.5px;top:1047px;font-size:16.5px;color:#f06a6a">-0.13%</div>
<svg style="left:1680px;top:1030px" width="240" height="50">
<path d="M7 28.5 L15 20.5 L23 28.5" stroke="#fff" stroke-width="1.2" fill="none"/>
<path d="M38.5 33 C40 25 46 19 53.5 18.5 M42 33 C43 27 48 22.5 53.5 22 M45.5 33 C46 29 49.5 26 53.5 25.5" stroke="#fff" stroke-width="1.1" fill="none"/>
<circle cx="51.5" cy="31.5" r="1.6" fill="#fff"/>
<path d="M65 22.5 H69 L73.5 18 V32.5 L69 28.5 H65Z" stroke="#fff" stroke-width="1.1" fill="none"/>
<path d="M76 22.5 C77.5 24 77.5 27 76 28.5 M79 19.5 C82 22.5 82 28.5 79 31.5 M82.5 16.5 C87 21 87 30 82.5 34" stroke="#bbb" stroke-width="1" fill="none"/>
<path d="M189.5 15.5 H208.5 V32 H204 L199 36 L194 32 H189.5Z" stroke="#fff" stroke-width="1.2" fill="none"/>
<path d="M234.7 0 V50" stroke="#5a5a5a" stroke-width="1"/>
</svg>
<div class="t" style="left:1782px;top:1037px;font-size:14.5px;color:#fff">11:48 AM</div>
<div class="t" style="left:1782px;top:1060px;font-size:15px;color:#fff">4/1/2024</div>

<div class="a" style="left:601px;top:334px;width:740px;height:347px;background:#eeeeee;border:1px solid #7a7a7a;box-shadow:0 5px 16px rgba(0,0,0,0.32)"></div>
<div class="a" style="left:602px;top:335px;width:738px;height:37px;background:#fff"></div>
<svg style="left:611px;top:343px" width="20" height="20" viewBox="0 0 20 20"><polygon points="10,0.5 18.5,5 18.5,15 10,19.5 1.5,15 1.5,5" fill="#b5121b"/><path d="M7.3 13.2 L8.4 7.2 L11 10.4 L13.6 6.8 L14 9.8" stroke="#fff" stroke-width="2.5" fill="none" stroke-linejoin="round" stroke-linecap="round"/></svg>
<div class="t" style="left:636px;top:346px;font-size:15px;color:#000">Compound Subtraction</div>
<div class="t" style="left:1248px;top:345px;font-size:17px;color:#111">?</div>
<svg style="left:1303px;top:346px" width="14" height="14"><path d="M1 1L13 13M13 1L1 13" stroke="#111" stroke-width="1.2"/></svg>
<!-- group 1 -->
<div class="a" style="left:615px;top:393px;width:348px;height:148px;border:1px solid #b9b9b9"></div>
<div class="t" style="left:622px;top:387px;font-size:13px;color:#3c3c3c;background:#eeeeee;padding:0 3px;font-size:12.8px">1. Select Foreground TIC Peak</div>
<div class="t" style="left:627px;top:419px;font-size:13px;color:#3c3c3c">Dataset:</div>
<div class="t" style="left:627px;top:450px;font-size:13px;color:#3c3c3c">Injection:</div>
<div class="t" style="left:627px;top:481px;font-size:13px;color:#3c3c3c">Function:</div>
<div class="t" style="left:627px;top:512px;font-size:13px;color:#3c3c3c">Peak:</div>
<div class="a" style="left:688px;top:413px;width:230px;height:24px;background:#fff;border:1px solid #7a7a7a;overflow:hidden"><div class="t" style="right:3px;top:5px;font-size:12.6px;color:#000">Sub\PPPEcdf\119PP plus PE 700_119.cdf</div></div>
<div class="a" style="left:688px;top:444px;width:230px;height:24px;background:#fff;border:1px solid #7a7a7a"><div class="t" style="left:3px;top:5px;font-size:13px;color:#000">Injection 1</div></div>
<div class="a" style="left:688px;top:475px;width:230px;height:24px;background:#fff;border:1px solid #7a7a7a"><div class="t" style="left:3px;top:5px;font-size:13px;color:#000">Function 1</div></div>
<div class="a" style="left:688px;top:506px;width:230px;height:24px;background:#fff;border:1px solid #7a7a7a"><div class="t" style="left:3px;top:5px;font-size:13px;color:#000">Peak #23 at 5.653</div></div>
<div class="a" style="left:925px;top:458px;width:27px;height:26px;background:#e6e6e6;border:1px solid #b3b3b3"></div>
<svg style="left:927px;top:460px" width="22" height="22" viewBox="0 0 22 22"><path d="M3.5 18.5 L12.5 9.5" stroke="#9cc2f5" stroke-width="3.2" stroke-linecap="round"/><path d="M10 7.5 L14.5 12" stroke="#103a80" stroke-width="2.6" stroke-linecap="round"/><circle cx="15.8" cy="6.2" r="3.4" fill="#103a80"/><path d="M13 9 L16 6" stroke="#103a80" stroke-width="3"/></svg>
<!-- group 2 -->
<div class="a" style="left:971px;top:393px;width:255px;height:148px;border:1px solid #b9b9b9"></div>
<div class="t" style="left:978px;top:387px;font-size:13px;color:#3c3c3c;background:#eeeeee;padding:0 3px;font-size:12.8px">2. Select Background TIC Peak</div>
<div class="t" style="left:983px;top:419px;font-size:13px;color:#3c3c3c">Dataset:</div>
<div class="t" style="left:983px;top:450px;font-size:13px;color:#3c3c3c">Injection:</div>
<div class="t" style="left:983px;top:481px;font-size:13px;color:#3c3c3c">Function:</div>
<div class="t" style="left:983px;top:512px;font-size:13px;color:#3c3c3c">Peak:</div>
<div class="a" style="left:1044px;top:413px;width:137px;height:24px;background:#fff;border:1px solid #7a7a7a;overflow:hidden"><div class="t" style="right:3px;top:5px;font-size:13px;color:#000">:cdf\122PP 700_122.cdf</div></div>
<div class="a" style="left:1044px;top:444px;width:137px;height:24px;background:#fff;border:1px solid #7a7a7a"><div class="t" style="left:3px;top:5px;font-size:13px;color:#000">Injection 1</div></div>
<div class="a" style="left:1044px;top:475px;width:137px;height:24px;background:#fff;border:1px solid #7a7a7a"><div class="t" style="left:3px;top:5px;font-size:13px;color:#000">Function 1</div></div>
<div class="a" style="left:1044px;top:506px;width:137px;height:24px;background:#fff;border:1px solid #7a7a7a"><div class="t" style="left:3px;top:5px;font-size:13px;color:#000">Peak #18 at 5.656</div></div>
<div class="a" style="left:1188px;top:458px;width:27px;height:26px;background:#e6e6e6;border:1px solid #b3b3b3"></div>
<svg style="left:1190px;top:460px" width="22" height="22" viewBox="0 0 22 22"><path d="M3.5 18.5 L12.5 9.5" stroke="#9cc2f5" stroke-width="3.2" stroke-linecap="round"/><path d="M10 7.5 L14.5 12" stroke="#103a80" stroke-width="2.6" stroke-linecap="round"/><circle cx="15.8" cy="6.2" r="3.4" fill="#103a80"/><path d="M13 9 L16 6" stroke="#103a80" stroke-width="3"/></svg>
<!-- buttons -->
<div class="a" style="left:1234px;top:385px;width:93px;height:28px;background:#eeeeee;border:1px solid #adadad"></div>
<div class="t" style="left:1234px;top:393px;width:93px;text-align:center;font-size:13px;color:#222">OK</div>
<div class="a" style="left:1234px;top:420px;width:93px;height:28px;background:#eeeeee;border:1px solid #adadad;border-right:2px solid #777;border-bottom:2px solid #777"></div>
<div class="t" style="left:1234px;top:428px;width:93px;text-align:center;font-size:13px;color:#222">Cancel</div>
<!-- group 3 -->
<div class="a" style="left:615px;top:557px;width:348px;height:86px;border:1px solid #b9b9b9"></div>
<div class="t" style="left:622px;top:551px;font-size:13px;color:#3c3c3c;background:#eeeeee;padding:0 3px;font-size:12.8px">3. Subtraction</div>
<div class="a" style="left:627px;top:582px;width:15px;height:15px;background:#fff;border:1px solid #8e8e8e"></div>
<svg style="left:627px;top:582px" width="15" height="15"><path d="M3.5 7.5 L6.2 10.5 L11.5 4" stroke="#444" stroke-width="1.2" fill="none"/></svg>
<div class="a" style="left:627px;top:613px;width:15px;height:15px;background:#fff;border:1px solid #8e8e8e"></div>
<svg style="left:627px;top:613px" width="15" height="15"><path d="M3.5 7.5 L6.2 10.5 L11.5 4" stroke="#444" stroke-width="1.2" fill="none"/></svg>
<div class="t" style="left:649px;top:583px;font-size:13px;color:#3c3c3c">Alignment Ofsset:</div>
<div class="t" style="left:649px;top:614px;font-size:13px;color:#3c3c3c">Normalization Factor:</div>
<div class="a" style="left:784px;top:577px;width:168px;height:24px;background:#fff;border:1px solid #9a9a9a"><div class="t" style="left:2px;top:5px;font-size:13px;color:#000">-0.0033</div></div>
<svg style="left:936px;top:580px" width="12" height="18"><path d="M2 5.5L6 2L10 5.5Z M2 12.5L6 16L10 12.5Z" fill="#555"/></svg>
<div class="a" style="left:784px;top:608px;width:168px;height:24px;background:#fff;border:2px solid #b5121b"><div class="t" style="left:2px;top:5px;font-size:13px;color:#000">114</div><div class="a" style="left:23.5px;top:3px;width:1px;height:16px;background:#000"></div><div class="t" style="left:27px;top:5px;font-size:13px;color:#000">%</div></div>
<svg style="left:936px;top:611px" width="12" height="18"><path d="M2 5.5L6 2L10 5.5Z M2 12.5L6 16L10 12.5Z" fill="#555"/></svg>

</body></html>
